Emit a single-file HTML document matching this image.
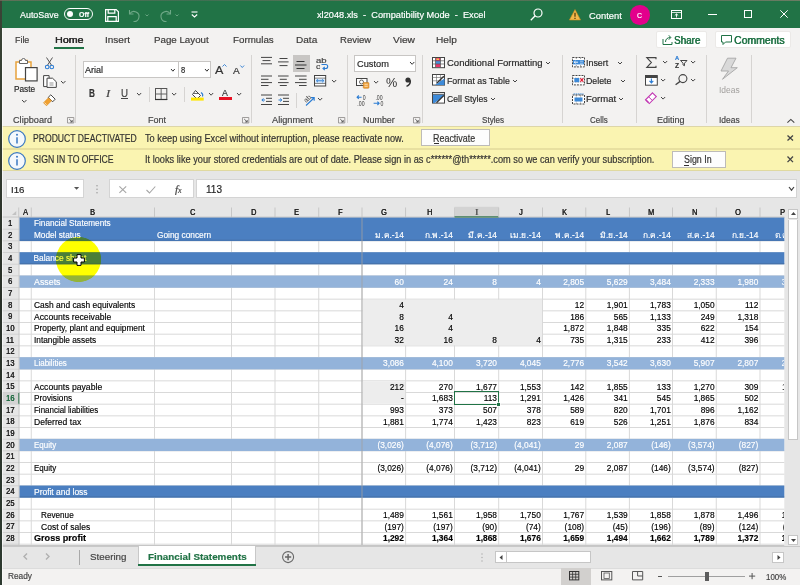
<!DOCTYPE html><html><head><meta charset="utf-8"><style>html,body{margin:0;padding:0;}body{width:800px;height:585px;overflow:hidden;position:relative;font-family:"Liberation Sans", sans-serif;background:#f3f2f1;}div{box-sizing:border-box;}</style></head><body>
<div style="position:absolute;left:0px;top:0px;width:800px;height:27.5px;background:#217346;"></div>
<div style="position:absolute;left:19.50px;top:10.00px;font-family:'Liberation Sans',sans-serif;font-size:9.4px;line-height:9.4px;color:#ffffff;font-weight:normal;white-space:nowrap;-webkit-text-stroke:0.18px #ffffff;transform:scaleX(0.9497);transform-origin:0 0;">AutoSave</div>
<div style="position:absolute;left:63.7px;top:8px;width:29.5px;height:12.2px;border:1.3px solid #fff;border-radius:6.5px;"></div>
<div style="position:absolute;left:67px;top:11px;width:6px;height:6px;background:#fff;border-radius:50%;"></div>
<div style="position:absolute;left:78.50px;top:11.00px;font-family:'Liberation Sans',sans-serif;font-size:7.8px;line-height:7.8px;color:#ffffff;font-weight:bold;white-space:nowrap;-webkit-text-stroke:0.18px #ffffff;transform:scaleX(0.8872);transform-origin:0 0;">Off</div>
<svg style="position:absolute;left:104.5px;top:8.5px;overflow:visible;" width="14" height="13" viewBox="0 0 14 13"><path d="M0.6 0.6h10.6l2.2 2.2v9.6H0.6z" fill="none" stroke="#fff" stroke-width="1.2"/><path d="M3.2 0.6v3.6h6.6V0.6M2.8 12.4V7.6h8.4v4.8" fill="none" stroke="#fff" stroke-width="1.2"/></svg>
<svg style="position:absolute;left:128px;top:8.5px;overflow:visible;" width="22" height="13" viewBox="0 0 22 13"><path d="M1.5 1v4h4" fill="none" stroke="#6fa887" stroke-width="1.1"/><path d="M1.8 4.8A5 5 0 1 1 5.5 12.5" fill="none" stroke="#6fa887" stroke-width="1.1"/><path d="M17.5 5.5l1.5 1.5 1.5-1.5" fill="none" stroke="#6fa887" stroke-width="0.9"/></svg>
<svg style="position:absolute;left:159px;top:8.5px;overflow:visible;" width="22" height="13" viewBox="0 0 22 13"><path d="M11.5 1v4h-4" fill="none" stroke="#6fa887" stroke-width="1.1"/><path d="M11.2 4.8A5 5 0 1 0 7.5 12.5" fill="none" stroke="#6fa887" stroke-width="1.1"/><path d="M16.5 5.5l1.5 1.5 1.5-1.5" fill="none" stroke="#6fa887" stroke-width="0.9"/></svg>
<svg style="position:absolute;left:191px;top:10.5px;overflow:visible;" width="7" height="8" viewBox="0 0 7 8"><path d="M0.5 1h6" stroke="#fff" stroke-width="1.1"/><path d="M0.8 3.5l2.7 2.4 2.7-2.4" fill="none" stroke="#fff" stroke-width="1.1"/></svg>
<div style="position:absolute;left:316.50px;top:11.00px;font-family:'Liberation Sans',sans-serif;font-size:9.0px;line-height:9.0px;color:#ffffff;font-weight:normal;white-space:nowrap;-webkit-text-stroke:0.18px #ffffff;transform:scaleX(1.0239);transform-origin:0 0;">xl2048.xls&nbsp; - &nbsp;Compatibility Mode&nbsp; - &nbsp;Excel</div>
<svg style="position:absolute;left:530px;top:7.5px;overflow:visible;" width="13" height="13" viewBox="0 0 13 13"><circle cx="8" cy="5" r="4" fill="none" stroke="#fff" stroke-width="1.2"/><path d="M5.2 7.8L0.8 12.2" stroke="#fff" stroke-width="1.3"/></svg>
<svg style="position:absolute;left:569px;top:9px;overflow:visible;" width="12" height="11.5" viewBox="0 0 12 11.5"><path d="M6 0.5L11.6 11H0.4z" fill="#f2b84b" stroke="#c98a1c" stroke-width="0.6"/><path d="M6 3.8v4M6 8.8v1.2" stroke="#3a2a00" stroke-width="1.1"/></svg>
<div style="position:absolute;left:588.75px;top:11.00px;font-family:'Liberation Sans',sans-serif;font-size:9.4px;line-height:9.4px;color:#ffffff;font-weight:normal;white-space:nowrap;-webkit-text-stroke:0.18px #ffffff;transform:scaleX(0.9971);transform-origin:0 0;">Content</div>
<div style="position:absolute;left:630px;top:5px;width:19.5px;height:19.5px;background:#e3008c;border-radius:50%;"></div>
<div style="position:absolute;left:636.90px;top:12.00px;font-family:'Liberation Sans',sans-serif;font-size:7.8px;line-height:7.8px;color:#ffffff;font-weight:normal;white-space:nowrap;-webkit-text-stroke:0.18px #ffffff;transform:scaleX(0.8903);transform-origin:0 0;">C</div>
<svg style="position:absolute;left:670.5px;top:9.5px;overflow:visible;" width="11" height="9" viewBox="0 0 11 9"><rect x="0.5" y="0.5" width="10" height="8" fill="none" stroke="#fff" stroke-width="1"/><path d="M0.5 2.5h10" stroke="#fff" stroke-width="0.8"/><path d="M5.5 4v3.5M3.8 5.5l1.7-1.6 1.7 1.6" fill="none" stroke="#fff" stroke-width="0.9"/></svg>
<div style="position:absolute;left:707.5px;top:13.5px;width:9.5px;height:1px;background:#fff;"></div>
<svg style="position:absolute;left:744px;top:10px;overflow:visible;" width="8" height="8" viewBox="0 0 8 8"><rect x="0.5" y="0.5" width="7" height="7" fill="none" stroke="#fff" stroke-width="1"/></svg>
<svg style="position:absolute;left:780px;top:10px;overflow:visible;" width="8" height="8" viewBox="0 0 8 8"><path d="M0.3 0.3l7.4 7.4M7.7 0.3L0.3 7.7" stroke="#fff" stroke-width="1"/></svg>
<div style="position:absolute;left:14.90px;top:35.00px;font-family:'Liberation Sans',sans-serif;font-size:9.5px;line-height:9.5px;color:#3b3a39;font-weight:normal;white-space:nowrap;-webkit-text-stroke:0.18px #3b3a39;transform:scaleX(0.9349);transform-origin:0 0;">File</div>
<div style="position:absolute;left:54.70px;top:35.00px;font-family:'Liberation Sans',sans-serif;font-size:9.5px;line-height:9.5px;color:#262626;font-weight:normal;white-space:nowrap;-webkit-text-stroke:0.18px #262626;transform:scaleX(1.1197);transform-origin:0 0;text-shadow:0.25px 0 0 #262626;">Home</div>
<div style="position:absolute;left:105.00px;top:35.00px;font-family:'Liberation Sans',sans-serif;font-size:9.5px;line-height:9.5px;color:#3b3a39;font-weight:normal;white-space:nowrap;-webkit-text-stroke:0.18px #3b3a39;transform:scaleX(1.0526);transform-origin:0 0;">Insert</div>
<div style="position:absolute;left:154.30px;top:35.00px;font-family:'Liberation Sans',sans-serif;font-size:9.5px;line-height:9.5px;color:#3b3a39;font-weight:normal;white-space:nowrap;-webkit-text-stroke:0.18px #3b3a39;transform:scaleX(1.0254);transform-origin:0 0;">Page Layout</div>
<div style="position:absolute;left:233.00px;top:35.00px;font-family:'Liberation Sans',sans-serif;font-size:9.5px;line-height:9.5px;color:#3b3a39;font-weight:normal;white-space:nowrap;-webkit-text-stroke:0.18px #3b3a39;transform:scaleX(1.0287);transform-origin:0 0;">Formulas</div>
<div style="position:absolute;left:296.25px;top:35.00px;font-family:'Liberation Sans',sans-serif;font-size:9.5px;line-height:9.5px;color:#3b3a39;font-weight:normal;white-space:nowrap;-webkit-text-stroke:0.18px #3b3a39;transform:scaleX(1.0576);transform-origin:0 0;">Data</div>
<div style="position:absolute;left:340.00px;top:35.00px;font-family:'Liberation Sans',sans-serif;font-size:9.5px;line-height:9.5px;color:#3b3a39;font-weight:normal;white-space:nowrap;-webkit-text-stroke:0.18px #3b3a39;transform:scaleX(1.0029);transform-origin:0 0;">Review</div>
<div style="position:absolute;left:392.50px;top:35.00px;font-family:'Liberation Sans',sans-serif;font-size:9.5px;line-height:9.5px;color:#3b3a39;font-weight:normal;white-space:nowrap;-webkit-text-stroke:0.18px #3b3a39;transform:scaleX(1.0771);transform-origin:0 0;">View</div>
<div style="position:absolute;left:435.50px;top:35.00px;font-family:'Liberation Sans',sans-serif;font-size:9.5px;line-height:9.5px;color:#3b3a39;font-weight:normal;white-space:nowrap;-webkit-text-stroke:0.18px #3b3a39;transform:scaleX(1.0629);transform-origin:0 0;">Help</div>
<div style="position:absolute;left:54px;top:47.3px;width:30px;height:2.2px;background:#217346;"></div>
<div style="position:absolute;left:655.6px;top:31px;width:51.4px;height:17.4px;background:#fff;border:1px solid #ebe9e7;border-radius:2px;"></div>
<svg style="position:absolute;left:661.5px;top:34px;overflow:visible;" width="12" height="11" viewBox="0 0 12 11"><path d="M1 5v5.5h9V8" fill="none" stroke="#217346" stroke-width="1"/><path d="M3.5 8c0-3 2-4.5 5-4.5M6.8 1.3l2 2.2-2 2.2" fill="none" stroke="#217346" stroke-width="1"/></svg>
<div style="position:absolute;left:674.00px;top:36.00px;font-family:'Liberation Sans',sans-serif;font-size:10px;line-height:10px;color:#217346;font-weight:normal;white-space:nowrap;-webkit-text-stroke:0.18px #217346;transform:scaleX(0.9850);transform-origin:0 0;text-shadow:0.35px 0 0 #217346;">Share</div>
<div style="position:absolute;left:714.8px;top:31px;width:76.4px;height:17.4px;background:#fff;border:1px solid #ebe9e7;border-radius:2px;"></div>
<svg style="position:absolute;left:721px;top:34.5px;overflow:visible;" width="11" height="10" viewBox="0 0 11 10"><path d="M0.5 0.5h10v6.5H4.5l-2.5 2.5V7H0.5z" fill="none" stroke="#217346" stroke-width="1"/></svg>
<div style="position:absolute;left:733.50px;top:36.00px;font-family:'Liberation Sans',sans-serif;font-size:10px;line-height:10px;color:#217346;font-weight:normal;white-space:nowrap;-webkit-text-stroke:0.18px #217346;transform:scaleX(1.0445);transform-origin:0 0;text-shadow:0.35px 0 0 #217346;">Comments</div>
<div style="position:absolute;left:75.2px;top:55px;width:1px;height:68px;background:#d6d4d2;"></div>
<div style="position:absolute;left:251.1px;top:55px;width:1px;height:68px;background:#d6d4d2;"></div>
<div style="position:absolute;left:346.9px;top:54.5px;width:1px;height:68.5px;background:#d6d4d2;"></div>
<div style="position:absolute;left:422.3px;top:55px;width:1px;height:68px;background:#d6d4d2;"></div>
<div style="position:absolute;left:562.3px;top:55px;width:1px;height:68px;background:#d6d4d2;"></div>
<div style="position:absolute;left:636.2px;top:54.5px;width:1px;height:68.0px;background:#d6d4d2;"></div>
<div style="position:absolute;left:706.3px;top:54.5px;width:1px;height:68.0px;background:#d6d4d2;"></div>
<div style="position:absolute;left:751.0px;top:54.5px;width:1px;height:68.0px;background:#d6d4d2;"></div>
<div style="position:absolute;left:12.90px;top:115.00px;font-family:'Liberation Sans',sans-serif;font-size:9.4px;line-height:9.4px;color:#444444;font-weight:normal;white-space:nowrap;-webkit-text-stroke:0.18px #444444;transform:scaleX(0.9768);transform-origin:0 0;">Clipboard</div>
<div style="position:absolute;left:148.00px;top:115.00px;font-family:'Liberation Sans',sans-serif;font-size:9.4px;line-height:9.4px;color:#444444;font-weight:normal;white-space:nowrap;-webkit-text-stroke:0.18px #444444;transform:scaleX(0.9628);transform-origin:0 0;">Font</div>
<div style="position:absolute;left:272.30px;top:115.00px;font-family:'Liberation Sans',sans-serif;font-size:9.4px;line-height:9.4px;color:#444444;font-weight:normal;white-space:nowrap;-webkit-text-stroke:0.18px #444444;transform:scaleX(0.9813);transform-origin:0 0;">Alignment</div>
<div style="position:absolute;left:362.90px;top:115.00px;font-family:'Liberation Sans',sans-serif;font-size:9.4px;line-height:9.4px;color:#444444;font-weight:normal;white-space:nowrap;-webkit-text-stroke:0.18px #444444;transform:scaleX(0.9546);transform-origin:0 0;">Number</div>
<div style="position:absolute;left:481.70px;top:115.00px;font-family:'Liberation Sans',sans-serif;font-size:9.4px;line-height:9.4px;color:#444444;font-weight:normal;white-space:nowrap;-webkit-text-stroke:0.18px #444444;transform:scaleX(0.8628);transform-origin:0 0;">Styles</div>
<div style="position:absolute;left:590.00px;top:115.00px;font-family:'Liberation Sans',sans-serif;font-size:9.4px;line-height:9.4px;color:#444444;font-weight:normal;white-space:nowrap;-webkit-text-stroke:0.18px #444444;transform:scaleX(0.8511);transform-origin:0 0;">Cells</div>
<div style="position:absolute;left:657.30px;top:115.00px;font-family:'Liberation Sans',sans-serif;font-size:9.4px;line-height:9.4px;color:#444444;font-weight:normal;white-space:nowrap;-webkit-text-stroke:0.18px #444444;transform:scaleX(0.9595);transform-origin:0 0;">Editing</div>
<div style="position:absolute;left:718.50px;top:115.00px;font-family:'Liberation Sans',sans-serif;font-size:9.4px;line-height:9.4px;color:#444444;font-weight:normal;white-space:nowrap;-webkit-text-stroke:0.18px #444444;transform:scaleX(0.9007);transform-origin:0 0;">Ideas</div>
<svg style="position:absolute;left:67.2px;top:116.8px;overflow:visible;" width="7.3" height="6.5" viewBox="0 0 7.3 6.5"><path d="M0.5 0.5h6.3v5.5H0.5z" fill="none" stroke="#8a8886" stroke-width="0.8"/><path d="M2.2 2l3 3M5.2 3v2H3.2" fill="none" stroke="#444" stroke-width="0.8"/></svg>
<svg style="position:absolute;left:242.2px;top:116.8px;overflow:visible;" width="7.3" height="6.5" viewBox="0 0 7.3 6.5"><path d="M0.5 0.5h6.3v5.5H0.5z" fill="none" stroke="#8a8886" stroke-width="0.8"/><path d="M2.2 2l3 3M5.2 3v2H3.2" fill="none" stroke="#444" stroke-width="0.8"/></svg>
<svg style="position:absolute;left:337.5px;top:116.8px;overflow:visible;" width="7.3" height="6.5" viewBox="0 0 7.3 6.5"><path d="M0.5 0.5h6.3v5.5H0.5z" fill="none" stroke="#8a8886" stroke-width="0.8"/><path d="M2.2 2l3 3M5.2 3v2H3.2" fill="none" stroke="#444" stroke-width="0.8"/></svg>
<svg style="position:absolute;left:412.6px;top:116.8px;overflow:visible;" width="7.3" height="6.5" viewBox="0 0 7.3 6.5"><path d="M0.5 0.5h6.3v5.5H0.5z" fill="none" stroke="#8a8886" stroke-width="0.8"/><path d="M2.2 2l3 3M5.2 3v2H3.2" fill="none" stroke="#444" stroke-width="0.8"/></svg>
<svg style="position:absolute;left:787.2px;top:119px;overflow:visible;" width="7.7" height="4" viewBox="0 0 7.7 4"><path d="M0.4 3.6L3.85 0.4 7.3 3.6" fill="none" stroke="#444" stroke-width="1.1"/></svg>
<svg style="position:absolute;left:14px;top:56.5px;overflow:visible;" width="24" height="25" viewBox="0 0 24 25"><path d="M2 5h4v-1.5h7V5h4v17H2z" fill="#fff" stroke="#e8a33d" stroke-width="1.5"/><path d="M5.5 6.5v-3h2a2 2 0 0 1 4 0h2v3z" fill="#fff" stroke="#666" stroke-width="1"/><rect x="11.5" y="10.6" width="11.6" height="13.3" fill="#fff" stroke="#444" stroke-width="1.2"/></svg>
<div style="position:absolute;left:13.90px;top:84.00px;font-family:'Liberation Sans',sans-serif;font-size:9.4px;line-height:9.4px;color:#262626;font-weight:normal;white-space:nowrap;-webkit-text-stroke:0.18px #262626;transform:scaleX(0.8827);transform-origin:0 0;">Paste</div>
<svg style="position:absolute;left:20.55px;top:99.35px;overflow:visible;" width="6.5" height="4.3" viewBox="0 0 6.5 4.3"><path d="M1 1L3.25 3.3L5.5 1" fill="none" stroke="#444" stroke-width="1"/></svg>
<svg style="position:absolute;left:44.5px;top:57px;overflow:visible;" width="9" height="12.5" viewBox="0 0 9 12.5"><path d="M1.5 0.5l5.2 8M7.5 0.5l-5.2 8" stroke="#555" stroke-width="1"/><circle cx="2.2" cy="10" r="1.8" fill="none" stroke="#2b7cd3" stroke-width="1.1"/><circle cx="6.8" cy="10" r="1.8" fill="none" stroke="#2b7cd3" stroke-width="1.1"/></svg>
<svg style="position:absolute;left:42.5px;top:75px;overflow:visible;" width="14" height="13" viewBox="0 0 14 13"><path d="M0.6 0.6h5.5v11h-5.5z" fill="#fff" stroke="#444" stroke-width="1"/><path d="M4 3.2h5.5l3.8 3.6v5.6H4z" fill="#fff" stroke="#444" stroke-width="1"/><path d="M6.5 8h4M6.5 10h4" stroke="#666" stroke-width="0.7"/></svg>
<svg style="position:absolute;left:59.55px;top:80.14999999999999px;overflow:visible;" width="6.5" height="4.3" viewBox="0 0 6.5 4.3"><path d="M1 1L3.25 3.3L5.5 1" fill="none" stroke="#444" stroke-width="1"/></svg>
<svg style="position:absolute;left:43px;top:93.8px;overflow:visible;" width="13" height="12.5" viewBox="0 0 13 12.5"><path d="M7.8 0.8l4.4 4.4-2.6 2.6-4.4-4.4z" fill="#fff" stroke="#444" stroke-width="1"/><path d="M5.5 3.8L0.5 8.8l3 3 5-5z" fill="#f0a030" stroke="#d98a1a" stroke-width="0.6"/><path d="M1.5 8.5l2.2 2.2" stroke="#fff" stroke-width="0.6"/></svg>
<div style="position:absolute;left:82.5px;top:61px;width:96px;height:17px;background:#fff;border:1px solid #c8c6c4;"></div>
<div style="position:absolute;left:85.30px;top:66.00px;font-family:'Liberation Sans',sans-serif;font-size:9.2px;line-height:9.2px;color:#262626;font-weight:normal;white-space:nowrap;-webkit-text-stroke:0.18px #262626;transform:scaleX(0.9837);transform-origin:0 0;">Arial</div>
<svg style="position:absolute;left:170.4px;top:68.10000000000001px;overflow:visible;" width="5.8" height="4.2" viewBox="0 0 5.8 4.2"><path d="M1 1L2.9 3.2L4.8 1" fill="none" stroke="#333" stroke-width="1"/></svg>
<div style="position:absolute;left:177.7px;top:61px;width:33.6px;height:17px;background:#fff;border:1px solid #c8c6c4;"></div>
<div style="position:absolute;left:181.00px;top:66.00px;font-family:'Liberation Sans',sans-serif;font-size:9.2px;line-height:9.2px;color:#262626;font-weight:normal;white-space:nowrap;-webkit-text-stroke:0.18px #262626;transform:scaleX(0.8226);transform-origin:0 0;">8</div>
<svg style="position:absolute;left:204.1px;top:68.10000000000001px;overflow:visible;" width="5.8" height="4.2" viewBox="0 0 5.8 4.2"><path d="M1 1L2.9 3.2L4.8 1" fill="none" stroke="#333" stroke-width="1"/></svg>
<div style="position:absolute;left:215.00px;top:65.00px;font-family:'Liberation Sans',sans-serif;font-size:11.5px;line-height:11.5px;color:#333;font-weight:normal;white-space:nowrap;-webkit-text-stroke:0.18px #333;transform:scaleX(1.0902);transform-origin:0 0;">A</div>
<svg style="position:absolute;left:222px;top:63.5px;overflow:visible;" width="5" height="3" viewBox="0 0 5 3"><path d="M0.5 2.5l2-2 2 2" fill="none" stroke="#2b7cd3" stroke-width="0.9"/></svg>
<div style="position:absolute;left:233.00px;top:66.00px;font-family:'Liberation Sans',sans-serif;font-size:9.8px;line-height:9.8px;color:#333;font-weight:normal;white-space:nowrap;-webkit-text-stroke:0.18px #333;transform:scaleX(1.0356);transform-origin:0 0;">A</div>
<svg style="position:absolute;left:239.8px;top:64.5px;overflow:visible;" width="4.5" height="3" viewBox="0 0 4.5 3"><path d="M0.4 0.5l1.85 2 1.85-2" fill="none" stroke="#2b7cd3" stroke-width="0.9"/></svg>
<div style="position:absolute;left:88.50px;top:88.00px;font-family:'Liberation Sans',sans-serif;font-size:10.5px;line-height:10.5px;color:#333;font-weight:bold;white-space:nowrap;-webkit-text-stroke:0.18px #333;transform:scaleX(0.7804);transform-origin:0 0;">B</div>
<div style="position:absolute;left:105.50px;top:89.00px;font-family:'Liberation Serif',serif;font-size:10.5px;line-height:10.5px;color:#444;font-weight:normal;white-space:nowrap;-webkit-text-stroke:0.18px #444;transform:scaleX(1.1940);transform-origin:0 0;font-style:italic;">I</div>
<div style="position:absolute;left:121.40px;top:89.00px;font-family:'Liberation Sans',sans-serif;font-size:10px;line-height:10px;color:#444;font-weight:normal;white-space:nowrap;-webkit-text-stroke:0.18px #444;transform:scaleX(0.9722);transform-origin:0 0;">U</div>
<div style="position:absolute;left:121.2px;top:98.3px;width:7.3px;height:0.9px;background:#444;"></div>
<svg style="position:absolute;left:136.20000000000002px;top:92.2px;overflow:visible;" width="6.2" height="4.2" viewBox="0 0 6.2 4.2"><path d="M1 1L3.1 3.2L5.2 1" fill="none" stroke="#444" stroke-width="1"/></svg>
<svg style="position:absolute;left:171.4px;top:92.2px;overflow:visible;" width="6.2" height="4.2" viewBox="0 0 6.2 4.2"><path d="M1 1L3.1 3.2L5.2 1" fill="none" stroke="#444" stroke-width="1"/></svg>
<svg style="position:absolute;left:207.6px;top:92.2px;overflow:visible;" width="6.2" height="4.2" viewBox="0 0 6.2 4.2"><path d="M1 1L3.1 3.2L5.2 1" fill="none" stroke="#444" stroke-width="1"/></svg>
<svg style="position:absolute;left:236.20000000000002px;top:92.2px;overflow:visible;" width="6.2" height="4.2" viewBox="0 0 6.2 4.2"><path d="M1 1L3.1 3.2L5.2 1" fill="none" stroke="#444" stroke-width="1"/></svg>
<div style="position:absolute;left:148.5px;top:87px;width:1px;height:14.7px;background:#d6d4d2;"></div>
<div style="position:absolute;left:184px;top:87px;width:1px;height:14.7px;background:#d6d4d2;"></div>
<svg style="position:absolute;left:154.8px;top:88px;overflow:visible;" width="12.3" height="12" viewBox="0 0 12.3 12"><rect x="0.5" y="0.5" width="11.3" height="11" fill="none" stroke="#555" stroke-width="1"/><path d="M6.15 0.5v11M0.5 6h11.3" stroke="#555" stroke-width="0.9"/><path d="M0 11.5h12.3" stroke="#333" stroke-width="1.2"/></svg>
<svg style="position:absolute;left:190.5px;top:88.5px;overflow:visible;" width="13" height="12" viewBox="0 0 13 12"><path d="M4.5 1.5l5 5-3.5 3.5-4.5-4.5z" fill="#fff" stroke="#444" stroke-width="1"/><path d="M2.5 4.5h5" stroke="#444" stroke-width="0.8"/><path d="M10 3.5c1.5 1 2 2.8 1.5 4" fill="none" stroke="#2b7cd3" stroke-width="1.1"/><rect x="0" y="8.6" width="12.7" height="3" fill="#ffe600"/></svg>
<div style="position:absolute;left:222.40px;top:88.00px;font-family:'Liberation Sans',sans-serif;font-size:9.6px;line-height:9.6px;color:#333;font-weight:normal;white-space:nowrap;-webkit-text-stroke:0.18px #333;transform:scaleX(0.9173);transform-origin:0 0;">A</div>
<div style="position:absolute;left:219.2px;top:97px;width:12.8px;height:3px;background:#e81123;"></div>
<div style="position:absolute;left:292.8px;top:54.7px;width:17px;height:17.2px;background:#c8c6c4;"></div>
<svg style="position:absolute;left:261.4px;top:56px;overflow:visible;" width="14" height="12" viewBox="0 0 14 12"><path d="M0 1.4H11" stroke="#444" stroke-width="1.0"/><path d="M1.5 4.6H9.5" stroke="#444" stroke-width="1.0"/><path d="M0 7.8H11" stroke="#444" stroke-width="1.0"/></svg>
<svg style="position:absolute;left:278.4px;top:57.4px;overflow:visible;" width="14" height="12" viewBox="0 0 14 12"><path d="M1.5 1.5H9.5" stroke="#444" stroke-width="1.0"/><path d="M0 4.9H10.6" stroke="#444" stroke-width="1.0"/><path d="M1.5 8.6H9.5" stroke="#444" stroke-width="1.0"/></svg>
<svg style="position:absolute;left:295.4px;top:60.2px;overflow:visible;" width="14" height="12" viewBox="0 0 14 12"><path d="M1.5 1.5H9.5" stroke="#333" stroke-width="1.0"/><path d="M0 5H11.5" stroke="#333" stroke-width="1.0"/><path d="M1.5 8.5H9.5" stroke="#333" stroke-width="1.0"/></svg>
<div style="position:absolute;left:316.20px;top:57.00px;font-family:'Liberation Sans',sans-serif;font-size:7.2px;line-height:7.2px;color:#444;font-weight:normal;white-space:nowrap;-webkit-text-stroke:0.18px #444;transform:scaleX(1.3263);transform-origin:0 0;">ab</div>
<div style="position:absolute;left:316.20px;top:63.00px;font-family:'Liberation Sans',sans-serif;font-size:7.2px;line-height:7.2px;color:#444;font-weight:normal;white-space:nowrap;-webkit-text-stroke:0.18px #444;transform:scaleX(1.1944);transform-origin:0 0;">c</div>
<svg style="position:absolute;left:320.5px;top:62.5px;overflow:visible;" width="7.5" height="7" viewBox="0 0 7.5 7"><path d="M0.5 1.5h4.2a2 2 0 0 1 0 4H2.5" fill="none" stroke="#2b7cd3" stroke-width="1.1"/><path d="M3.8 3.8L2 5.5l1.8 1.6" fill="none" stroke="#2b7cd3" stroke-width="1.1"/></svg>
<svg style="position:absolute;left:261.4px;top:75.4px;overflow:visible;" width="14" height="12" viewBox="0 0 14 12"><path d="M0 1H11" stroke="#444" stroke-width="1.0"/><path d="M0 4.3H7.5" stroke="#444" stroke-width="1.0"/><path d="M0 7.6H11" stroke="#444" stroke-width="1.0"/><path d="M0 10.5H7.5" stroke="#444" stroke-width="1.0"/></svg>
<svg style="position:absolute;left:278.4px;top:75.4px;overflow:visible;" width="14" height="12" viewBox="0 0 14 12"><path d="M0 1H10.6" stroke="#444" stroke-width="1.0"/><path d="M1.8 4.3H8.8" stroke="#444" stroke-width="1.0"/><path d="M0 7.6H10.6" stroke="#444" stroke-width="1.0"/><path d="M1.8 10.5H8.8" stroke="#444" stroke-width="1.0"/></svg>
<svg style="position:absolute;left:295.4px;top:75.4px;overflow:visible;" width="14" height="12" viewBox="0 0 14 12"><path d="M0 1H11.6" stroke="#444" stroke-width="1.0"/><path d="M4 4.3H11.6" stroke="#444" stroke-width="1.0"/><path d="M0 7.6H11.6" stroke="#444" stroke-width="1.0"/><path d="M4 10.5H11.6" stroke="#444" stroke-width="1.0"/></svg>
<svg style="position:absolute;left:314px;top:75px;overflow:visible;" width="12.2" height="11.5" viewBox="0 0 12.2 11.5"><rect x="0.5" y="0.5" width="11.2" height="10.5" fill="#fff" stroke="#444" stroke-width="1"/><path d="M0.5 3.2h11.2M0.5 8.3h11.2" stroke="#444" stroke-width="0.8"/><rect x="1.5" y="3.7" width="9.2" height="4.1" fill="#cfe3f7"/><path d="M2.5 5.75h7.2M4 4.3L2.5 5.75 4 7.2M8.2 4.3l1.5 1.45-1.5 1.45" fill="none" stroke="#2b7cd3" stroke-width="0.9"/></svg>
<svg style="position:absolute;left:331.0px;top:79.10000000000001px;overflow:visible;" width="6.2" height="4.2" viewBox="0 0 6.2 4.2"><path d="M1 1L3.1 3.2L5.2 1" fill="none" stroke="#444" stroke-width="1"/></svg>
<svg style="position:absolute;left:261.4px;top:94.2px;overflow:visible;" width="14" height="12" viewBox="0 0 14 12"><path d="M0 1H11" stroke="#444" stroke-width="1.0"/><path d="M5 4.3H11" stroke="#444" stroke-width="1.0"/><path d="M5 7.4H11" stroke="#444" stroke-width="1.0"/><path d="M0 10.5H11" stroke="#444" stroke-width="1.0"/></svg>
<svg style="position:absolute;left:261.4px;top:96.5px;overflow:visible;transform:translateY(2px);" width="5" height="5" viewBox="0 0 5 5"><path d="M4 1H1.2M2.5 -0.5L0.8 1 2.5 2.5" fill="none" stroke="#2b7cd3" stroke-width="1"/></svg>
<svg style="position:absolute;left:278.4px;top:94.2px;overflow:visible;" width="14" height="12" viewBox="0 0 14 12"><path d="M0 1H11" stroke="#444" stroke-width="1.0"/><path d="M5 4.3H11" stroke="#444" stroke-width="1.0"/><path d="M5 7.4H11" stroke="#444" stroke-width="1.0"/><path d="M0 10.5H11" stroke="#444" stroke-width="1.0"/></svg>
<svg style="position:absolute;left:278.4px;top:96.5px;overflow:visible;transform:translateY(2px);" width="5" height="5" viewBox="0 0 5 5"><path d="M0.5 1H3.5M2.2 -0.5L3.9 1 2.2 2.5" fill="none" stroke="#2b7cd3" stroke-width="1"/></svg>
<div style="position:absolute;left:295.5px;top:92.5px;width:1px;height:15.3px;background:#d6d4d2;"></div>
<svg style="position:absolute;left:301.7px;top:93.6px;overflow:visible;" width="13.3" height="12.1" viewBox="0 0 13.3 12.1"><text x="1.5" y="8" font-size="6.8" fill="#444" font-family="Liberation Sans" transform="rotate(-45 4 5)">ab</text><path d="M4 11.5l8-7.5M9 3.6h3.2v3.2" fill="none" stroke="#2b7cd3" stroke-width="1.1"/></svg>
<svg style="position:absolute;left:317.29999999999995px;top:97.4px;overflow:visible;" width="6.2" height="4.2" viewBox="0 0 6.2 4.2"><path d="M1 1L3.1 3.2L5.2 1" fill="none" stroke="#444" stroke-width="1"/></svg>
<div style="position:absolute;left:353.8px;top:54.7px;width:62.7px;height:17.6px;background:#fff;border:1px solid #c8c6c4;"></div>
<div style="position:absolute;left:357.00px;top:59.00px;font-family:'Liberation Sans',sans-serif;font-size:9.4px;line-height:9.4px;color:#262626;font-weight:normal;white-space:nowrap;-webkit-text-stroke:0.18px #262626;transform:scaleX(0.9851);transform-origin:0 0;">Custom</div>
<svg style="position:absolute;left:408.65000000000003px;top:61.35px;overflow:visible;" width="6.3" height="4.3" viewBox="0 0 6.3 4.3"><path d="M1 1L3.15 3.3L5.3 1" fill="none" stroke="#333" stroke-width="1"/></svg>
<svg style="position:absolute;left:356px;top:77.6px;overflow:visible;" width="13.3" height="10.5" viewBox="0 0 13.3 10.5"><rect x="0.5" y="0.5" width="10.5" height="7" fill="#fff" stroke="#444" stroke-width="1"/><circle cx="5.5" cy="4" r="2" fill="none" stroke="#444" stroke-width="0.8"/><rect x="7.3" y="4.6" width="5.6" height="5.6" rx="0.6" fill="#f2a33a" stroke="#c9781a" stroke-width="0.6"/><path d="M8.5 6.3h3.2M8.5 8.3h3.2" stroke="#fff" stroke-width="0.6"/></svg>
<svg style="position:absolute;left:373.0px;top:80.4px;overflow:visible;" width="6.2" height="4.2" viewBox="0 0 6.2 4.2"><path d="M1 1L3.1 3.2L5.2 1" fill="none" stroke="#444" stroke-width="1"/></svg>
<div style="position:absolute;left:385.70px;top:76.00px;font-family:'Liberation Sans',sans-serif;font-size:13px;line-height:13px;color:#333;font-weight:normal;white-space:nowrap;-webkit-text-stroke:0.18px #333;transform:scaleX(0.9767);transform-origin:0 0;-webkit-text-stroke:0;">%</div>
<svg style="position:absolute;left:405.4px;top:77.2px;overflow:visible;" width="6.5" height="9.8" viewBox="0 0 6.5 9.8"><circle cx="3" cy="3" r="2.6" fill="#333"/><path d="M5.3 3.2c0.2 3-1.2 5.2-3.8 6.2" fill="none" stroke="#333" stroke-width="1.5"/></svg>
<svg style="position:absolute;left:356px;top:93.6px;overflow:visible;" width="13" height="12.2" viewBox="0 0 13 12.2"><path d="M5.6 3.2H1.2M2.8 1.5L1.1 3.2l1.7 1.7" fill="none" stroke="#2b7cd3" stroke-width="1.1"/><g transform="scale(0.68 1)"><text x="10" y="6" font-size="7.6" fill="#333" font-family="Liberation Sans">0</text><text x="2" y="12.4" font-size="7.6" fill="#333" font-family="Liberation Sans">.00</text></g></svg>
<svg style="position:absolute;left:373px;top:93.6px;overflow:visible;" width="13" height="12.2" viewBox="0 0 13 12.2"><g transform="scale(0.68 1)"><text x="3.5" y="6" font-size="7.6" fill="#333" font-family="Liberation Sans">.00</text><text x="11.2" y="12.4" font-size="7.6" fill="#333" font-family="Liberation Sans">0</text></g><path d="M0.6 9.3h5.4M4.4 7.6l1.7 1.7-1.7 1.7" fill="none" stroke="#2b7cd3" stroke-width="1.1"/></svg>
<svg style="position:absolute;left:431.6px;top:56.7px;overflow:visible;" width="13" height="11.2" viewBox="0 0 13 11.2"><rect x="0.5" y="0.5" width="12" height="10.2" fill="#fff" stroke="#444" stroke-width="1"/><rect x="3.5" y="1" width="5" height="3" fill="#e8356b"/><rect x="3.5" y="4" width="5" height="3" fill="#4a90d9"/><rect x="3.5" y="7" width="5" height="3" fill="#e8356b"/><rect x="4.5" y="1.5" width="2.5" height="1.5" fill="#f2c14e"/><path d="M0.5 3.8h12M0.5 7h12M3.5 0.5v10.2M8.5 0.5v10.2" stroke="#555" stroke-width="0.7"/></svg>
<div style="position:absolute;left:447.30px;top:58.00px;font-family:'Liberation Sans',sans-serif;font-size:9.9px;line-height:9.9px;color:#262626;font-weight:normal;white-space:nowrap;-webkit-text-stroke:0.18px #262626;transform:scaleX(0.9619);transform-origin:0 0;">Conditional Formatting</div>
<svg style="position:absolute;left:545.1px;top:60.7px;overflow:visible;" width="6" height="4" viewBox="0 0 6 4"><path d="M1 1L3.0 3L5 1" fill="none" stroke="#444" stroke-width="1"/></svg>
<svg style="position:absolute;left:431.6px;top:74.4px;overflow:visible;" width="13" height="11.6" viewBox="0 0 13 11.6"><rect x="0.5" y="0.5" width="12" height="10.6" fill="#fff" stroke="#444" stroke-width="1"/><path d="M0.5 3.5h12M0.5 6.8h12M4.5 0.5v10.6M8.5 0.5v10.6" stroke="#666" stroke-width="0.6"/><path d="M12.5 4.5v6.6H3z" fill="#3d8ad8"/><path d="M11.8 2.2L5 9" stroke="#333" stroke-width="1.3"/></svg>
<div style="position:absolute;left:447.30px;top:76.00px;font-family:'Liberation Sans',sans-serif;font-size:9.9px;line-height:9.9px;color:#262626;font-weight:normal;white-space:nowrap;-webkit-text-stroke:0.18px #262626;transform:scaleX(0.8900);transform-origin:0 0;">Format as Table</div>
<svg style="position:absolute;left:512.2px;top:78.5px;overflow:visible;" width="6" height="4" viewBox="0 0 6 4"><path d="M1 1L3.0 3L5 1" fill="none" stroke="#444" stroke-width="1"/></svg>
<svg style="position:absolute;left:431.6px;top:92.2px;overflow:visible;" width="13" height="11.6" viewBox="0 0 13 11.6"><rect x="0.5" y="0.5" width="12" height="10.6" fill="#fff" stroke="#444" stroke-width="1"/><path d="M1 2.5h11v1.5L2.5 11H1z" fill="#3d8ad8"/><path d="M0.5 2.3h12" stroke="#444" stroke-width="0.8"/><path d="M11.8 3.5L4.5 10.8" stroke="#333" stroke-width="1.3"/></svg>
<div style="position:absolute;left:447.30px;top:94.00px;font-family:'Liberation Sans',sans-serif;font-size:9.9px;line-height:9.9px;color:#262626;font-weight:normal;white-space:nowrap;-webkit-text-stroke:0.18px #262626;transform:scaleX(0.8701);transform-origin:0 0;">Cell Styles</div>
<svg style="position:absolute;left:489.8px;top:96.5px;overflow:visible;" width="6" height="4" viewBox="0 0 6 4"><path d="M1 1L3.0 3L5 1" fill="none" stroke="#444" stroke-width="1"/></svg>
<svg style="position:absolute;left:572px;top:57.1px;overflow:visible;" width="13" height="10.4" viewBox="0 0 13 10.4"><rect x="0.5" y="0.5" width="12" height="9.4" fill="#fff" stroke="#444" stroke-width="1" stroke-dasharray="2 1"/><path d="M4.3 0.5v9.4M8.6 0.5v9.4" stroke="#777" stroke-width="0.7" stroke-dasharray="1.5 1"/><rect x="1" y="3" width="11" height="4.4" fill="#3d8ad8"/><path d="M6 5.2H2.2M3.5 4L2.2 5.2 3.5 6.4" fill="none" stroke="#fff" stroke-width="0.9"/><path d="M8 4.2h3M8 6.2h3" stroke="#cfe3f7" stroke-width="0.7"/></svg>
<div style="position:absolute;left:586.40px;top:58.00px;font-family:'Liberation Sans',sans-serif;font-size:9.9px;line-height:9.9px;color:#262626;font-weight:normal;white-space:nowrap;-webkit-text-stroke:0.18px #262626;transform:scaleX(0.9010);transform-origin:0 0;">Insert</div>
<svg style="position:absolute;left:617.0px;top:60.7px;overflow:visible;" width="6" height="4" viewBox="0 0 6 4"><path d="M1 1L3.0 3L5 1" fill="none" stroke="#444" stroke-width="1"/></svg>
<svg style="position:absolute;left:572px;top:75px;overflow:visible;" width="13" height="10.4" viewBox="0 0 13 10.4"><rect x="0.5" y="0.5" width="12" height="9.4" fill="#fff" stroke="#444" stroke-width="1" stroke-dasharray="2 1"/><path d="M0.5 3.2h12M0.5 7h12" stroke="#777" stroke-width="0.7" stroke-dasharray="1.5 1"/><rect x="2.3" y="3" width="5" height="4.2" fill="#3d8ad8"/><path d="M8.3 3.3l3 3.4M11.3 3.3l-3 3.4" stroke="#e8112d" stroke-width="1.1"/></svg>
<div style="position:absolute;left:586.40px;top:76.00px;font-family:'Liberation Sans',sans-serif;font-size:9.9px;line-height:9.9px;color:#262626;font-weight:normal;white-space:nowrap;-webkit-text-stroke:0.18px #262626;transform:scaleX(0.8913);transform-origin:0 0;">Delete</div>
<svg style="position:absolute;left:619.7px;top:78.5px;overflow:visible;" width="6" height="4" viewBox="0 0 6 4"><path d="M1 1L3.0 3L5 1" fill="none" stroke="#444" stroke-width="1"/></svg>
<svg style="position:absolute;left:572px;top:92.5px;overflow:visible;" width="13" height="11.5" viewBox="0 0 13 11.5"><path d="M1.5 1h10" stroke="#3d8ad8" stroke-width="1.2" stroke-dasharray="1.6 0.6"/><rect x="0.5" y="2" width="12" height="9" fill="#fff" stroke="#444" stroke-width="1" stroke-dasharray="2 1"/><path d="M4.3 2v9M8.6 2v9" stroke="#777" stroke-width="0.7" stroke-dasharray="1.5 1"/><rect x="2.5" y="4.5" width="8" height="4" fill="#3d8ad8"/></svg>
<div style="position:absolute;left:586.40px;top:94.00px;font-family:'Liberation Sans',sans-serif;font-size:9.9px;line-height:9.9px;color:#262626;font-weight:normal;white-space:nowrap;-webkit-text-stroke:0.18px #262626;transform:scaleX(0.9638);transform-origin:0 0;">Format</div>
<svg style="position:absolute;left:618.2px;top:96.5px;overflow:visible;" width="6" height="4" viewBox="0 0 6 4"><path d="M1 1L3.0 3L5 1" fill="none" stroke="#444" stroke-width="1"/></svg>
<svg style="position:absolute;left:646.3px;top:57.2px;overflow:visible;" width="10.4" height="11" viewBox="0 0 10.4 11"><path d="M10 2.2V0.6H0.8L5.4 5.5 0.8 10.4H10V8.8" fill="none" stroke="#444" stroke-width="1.1"/></svg>
<svg style="position:absolute;left:661.8px;top:60.35px;overflow:visible;" width="6.2" height="4.1" viewBox="0 0 6.2 4.1"><path d="M1 1L3.1 3.1L5.2 1" fill="none" stroke="#444" stroke-width="1"/></svg>
<div style="position:absolute;left:675.20px;top:56.00px;font-family:'Liberation Sans',sans-serif;font-size:5.6px;line-height:5.6px;color:#2b7cd3;font-weight:bold;white-space:nowrap;-webkit-text-stroke:0.18px #2b7cd3;transform:scaleX(1.0169);transform-origin:0 0;">A</div>
<div style="position:absolute;left:675.20px;top:62.00px;font-family:'Liberation Sans',sans-serif;font-size:7.4px;line-height:7.4px;color:#333;font-weight:bold;white-space:nowrap;-webkit-text-stroke:0.18px #333;transform:scaleX(0.9083);transform-origin:0 0;">Z</div>
<svg style="position:absolute;left:680.4px;top:60.3px;overflow:visible;" width="7.5" height="6" viewBox="0 0 7.5 6"><path d="M0.5 0.5h6.5L4.5 3.2v2.5l-1.5-0.8V3.2z" fill="none" stroke="#444" stroke-width="1"/></svg>
<svg style="position:absolute;left:690.1px;top:60.35px;overflow:visible;" width="6.2" height="4.1" viewBox="0 0 6.2 4.1"><path d="M1 1L3.1 3.1L5.2 1" fill="none" stroke="#444" stroke-width="1"/></svg>
<svg style="position:absolute;left:644.9px;top:74.8px;overflow:visible;" width="12.8" height="10.7" viewBox="0 0 12.8 10.7"><rect x="0.5" y="0.5" width="11.8" height="9.7" fill="#fff" stroke="#444" stroke-width="1"/><path d="M0.5 2h11.8" stroke="#444" stroke-width="2"/><path d="M6.4 3.5v4.5M4.5 6l1.9 2 1.9-2" fill="none" stroke="#2b7cd3" stroke-width="1.1"/></svg>
<svg style="position:absolute;left:660.4px;top:78.15px;overflow:visible;" width="6.2" height="4.1" viewBox="0 0 6.2 4.1"><path d="M1 1L3.1 3.1L5.2 1" fill="none" stroke="#444" stroke-width="1"/></svg>
<svg style="position:absolute;left:675.2px;top:74.3px;overflow:visible;" width="12.5" height="11.2" viewBox="0 0 12.5 11.2"><circle cx="7.9" cy="4.6" r="4" fill="none" stroke="#444" stroke-width="1.1"/><path d="M5.1 7.4L0.6 10.8" stroke="#444" stroke-width="1.3"/></svg>
<svg style="position:absolute;left:690.1px;top:78.15px;overflow:visible;" width="6.2" height="4.1" viewBox="0 0 6.2 4.1"><path d="M1 1L3.1 3.1L5.2 1" fill="none" stroke="#444" stroke-width="1"/></svg>
<svg style="position:absolute;left:645.3px;top:92.3px;overflow:visible;" width="12" height="11.7" viewBox="0 0 12 11.7"><path d="M7.5 0.8l3.8 3.8-7 7-3.8-3.8z" fill="#fff" stroke="#c239b3" stroke-width="1.1"/><path d="M3.6 4.8l3.8 3.8" stroke="#c239b3" stroke-width="1"/><path d="M1 8l2.5 2.5" stroke="#c239b3" stroke-width="1.5"/></svg>
<svg style="position:absolute;left:660.4px;top:96.45px;overflow:visible;" width="6.2" height="4.1" viewBox="0 0 6.2 4.1"><path d="M1 1L3.1 3.1L5.2 1" fill="none" stroke="#444" stroke-width="1"/></svg>
<svg style="position:absolute;left:720px;top:56.5px;overflow:visible;" width="18" height="23" viewBox="0 0 18 23"><path d="M7.5 1.2 L16.0 1.2 L11.0 10.7 L17.3 10.7 L2.5 22.3 L8.5 14.0 L1.0 14.0z" fill="#d9d9d9" stroke="#a6a6a6" stroke-width="0.9" stroke-linejoin="round"/></svg>
<div style="position:absolute;left:718.50px;top:85.00px;font-family:'Liberation Sans',sans-serif;font-size:9.6px;line-height:9.6px;color:#a19f9d;font-weight:normal;white-space:nowrap;-webkit-text-stroke:0.18px #a19f9d;transform:scaleX(0.8819);transform-origin:0 0;-webkit-text-stroke:0;">Ideas</div>
<div style="position:absolute;left:0px;top:125.8px;width:800px;height:45px;background:#faf4b1;"></div>
<div style="position:absolute;left:0px;top:125.8px;width:800px;height:1px;background:#ddd6a8;"></div>
<div style="position:absolute;left:0px;top:148.4px;width:800px;height:1.2px;background:#e8e0a0;"></div>
<div style="position:absolute;left:0px;top:170.2px;width:800px;height:0.8px;background:#e0d9a0;"></div>
<svg style="position:absolute;left:7.9px;top:130.1px;overflow:visible;" width="18" height="18" viewBox="0 0 18 18"><circle cx="9" cy="9" r="8.3" fill="#f4f8fc" stroke="#3a78c2" stroke-width="1.2"/><path d="M9 7.2v6.3" stroke="#3a78c2" stroke-width="1.5"/><circle cx="9" cy="4.8" r="1" fill="#3a78c2"/></svg>
<svg style="position:absolute;left:7.9px;top:151.9px;overflow:visible;" width="18" height="18" viewBox="0 0 18 18"><circle cx="9" cy="9" r="8.3" fill="#f4f8fc" stroke="#3a78c2" stroke-width="1.2"/><path d="M9 7.2v6.3" stroke="#3a78c2" stroke-width="1.5"/><circle cx="9" cy="4.8" r="1" fill="#3a78c2"/></svg>
<svg style="position:absolute;left:786.7px;top:134.9px;overflow:visible;" width="6.5" height="6.1" viewBox="0 0 6.5 6.1"><path d="M0.5 0.5l5.5 5.1M6 0.5L0.5 5.6" stroke="#444" stroke-width="1.3"/></svg>
<svg style="position:absolute;left:786.7px;top:156.4px;overflow:visible;" width="6.5" height="6.6" viewBox="0 0 6.5 6.6"><path d="M0.5 0.5l5.5 5.6M6 0.5L0.5 6.1" stroke="#444" stroke-width="1.3"/></svg>
<div style="position:absolute;left:32.80px;top:133.00px;font-family:'Liberation Sans',sans-serif;font-size:10.5px;line-height:10.5px;color:#323130;font-weight:normal;white-space:nowrap;-webkit-text-stroke:0.18px #323130;transform:scaleX(0.8193);transform-origin:0 0;">PRODUCT DEACTIVATED</div>
<div style="position:absolute;left:145.00px;top:134.00px;font-family:'Liberation Sans',sans-serif;font-size:10.4px;line-height:10.4px;color:#323130;font-weight:normal;white-space:nowrap;-webkit-text-stroke:0.18px #323130;transform:scaleX(0.8872);transform-origin:0 0;">To keep using Excel without interruption, please reactivate now.</div>
<div style="position:absolute;left:421.25px;top:129.3px;width:68.25px;height:16.5px;background:#fdfdfd;border:1px solid #bdbbb8;"></div>
<div style="position:absolute;left:433.25px;top:134.00px;font-family:'Liberation Sans',sans-serif;font-size:10.4px;line-height:10.4px;color:#323130;font-weight:normal;white-space:nowrap;-webkit-text-stroke:0.18px #323130;transform:scaleX(0.8598);transform-origin:0 0;">Reactivate</div>
<div style="position:absolute;left:433.5px;top:143.3px;width:5.8px;height:0.8px;background:#323130;"></div>
<div style="position:absolute;left:32.80px;top:154.00px;font-family:'Liberation Sans',sans-serif;font-size:10.5px;line-height:10.5px;color:#323130;font-weight:normal;white-space:nowrap;-webkit-text-stroke:0.18px #323130;transform:scaleX(0.8258);transform-origin:0 0;">SIGN IN TO OFFICE</div>
<div style="position:absolute;left:145.00px;top:155.00px;font-family:'Liberation Sans',sans-serif;font-size:10.4px;line-height:10.4px;color:#323130;font-weight:normal;white-space:nowrap;-webkit-text-stroke:0.18px #323130;transform:scaleX(0.8879);transform-origin:0 0;">It looks like your stored credentials are out of date. Please sign in as c******@th******.com so we can verify your subscription.</div>
<div style="position:absolute;left:671.75px;top:151px;width:54px;height:16.5px;background:#fdfdfd;border:1px solid #bdbbb8;"></div>
<div style="position:absolute;left:684.20px;top:155.00px;font-family:'Liberation Sans',sans-serif;font-size:10.0px;line-height:10.0px;color:#323130;font-weight:normal;white-space:nowrap;-webkit-text-stroke:0.18px #323130;transform:scaleX(0.8860);transform-origin:0 0;">Sign In</div>
<div style="position:absolute;left:684.3px;top:164.8px;width:5px;height:0.8px;background:#323130;"></div>
<div style="position:absolute;left:0px;top:171px;width:800px;height:35px;background:#e6e6e6;"></div>
<div style="position:absolute;left:5.7px;top:179.2px;width:78.6px;height:19.1px;background:#fff;border:1px solid #d4d4d4;"></div>
<div style="position:absolute;left:11.25px;top:185.00px;font-family:'Liberation Sans',sans-serif;font-size:9.4px;line-height:9.4px;color:#262626;font-weight:normal;white-space:nowrap;-webkit-text-stroke:0.18px #262626;transform:scaleX(1.0332);transform-origin:0 0;">I16</div>
<svg style="position:absolute;left:73.8px;top:187px;overflow:visible;" width="5.2" height="2.8" viewBox="0 0 5.2 2.8"><path d="M0 0h5.2L2.6 2.8z" fill="#555"/></svg>
<svg style="position:absolute;left:95.5px;top:184.8px;overflow:visible;" width="2" height="8.5" viewBox="0 0 2 8.5"><circle cx="1" cy="0.8" r="0.75" fill="#9a9a9a"/><circle cx="1" cy="4.25" r="0.75" fill="#9a9a9a"/><circle cx="1" cy="7.7" r="0.75" fill="#9a9a9a"/></svg>
<div style="position:absolute;left:108.6px;top:179.3px;width:85px;height:19px;background:#fff;border:1px solid #d4d4d4;"></div>
<svg style="position:absolute;left:119.3px;top:185.8px;overflow:visible;" width="7.6" height="7.3" viewBox="0 0 7.6 7.3"><path d="M0.4 0.4l6.8 6.5M7.2 0.4L0.4 6.9" stroke="#a6a6a6" stroke-width="1.1"/></svg>
<svg style="position:absolute;left:146.4px;top:185.8px;overflow:visible;" width="9.8" height="7.3" viewBox="0 0 9.8 7.3"><path d="M0.5 4l3 3 5.8-6.5" fill="none" stroke="#a6a6a6" stroke-width="1.1"/></svg>
<div style="position:absolute;left:174.50px;top:185.00px;font-family:'Liberation Serif',serif;font-size:10.5px;line-height:10.5px;color:#444;font-weight:normal;white-space:nowrap;-webkit-text-stroke:0.18px #444;transform:scaleX(1.0607);transform-origin:0 0;font-style:italic;">f<span style="font-size:0.72em">x</span></div>
<div style="position:absolute;left:196.3px;top:179.3px;width:601px;height:19px;background:#fff;border:1px solid #d4d4d4;"></div>
<div style="position:absolute;left:205.70px;top:185.00px;font-family:'Liberation Sans',sans-serif;font-size:10.2px;line-height:10.2px;color:#262626;font-weight:normal;white-space:nowrap;-webkit-text-stroke:0.18px #262626;transform:scaleX(0.9835);transform-origin:0 0;">113</div>
<svg style="position:absolute;left:787.5px;top:186.1px;overflow:visible;" width="7" height="5.2" viewBox="0 0 7 5.2"><path d="M1 1L3.5 4.2L6 1" fill="none" stroke="#444" stroke-width="1.2"/></svg>
<div style="position:absolute;left:0px;top:206px;width:800px;height:340px;background:#e6e6e6;"></div>
<svg style="position:absolute;left:0px;top:0px;overflow:visible;" width="800" height="585" viewBox="0 0 800 585"><rect x="19.2" y="217.5" width="765.0999999999999" height="328.1" fill="#fff"/><rect x="30.75" y="217.5" width="1" height="328.1" fill="#d9d9d9"/><rect x="154.0" y="217.5" width="1" height="328.1" fill="#d9d9d9"/><rect x="231.0" y="217.5" width="1" height="328.1" fill="#d9d9d9"/><rect x="274.5" y="217.5" width="1" height="328.1" fill="#d9d9d9"/><rect x="318.25" y="217.5" width="1" height="328.1" fill="#d9d9d9"/><rect x="361.5" y="217.5" width="1" height="328.1" fill="#d9d9d9"/><rect x="405.1" y="217.5" width="1" height="328.1" fill="#d9d9d9"/><rect x="454.0" y="217.5" width="1" height="328.1" fill="#d9d9d9"/><rect x="498.2" y="217.5" width="1" height="328.1" fill="#d9d9d9"/><rect x="542.0" y="217.5" width="1" height="328.1" fill="#d9d9d9"/><rect x="585.3" y="217.5" width="1" height="328.1" fill="#d9d9d9"/><rect x="628.9" y="217.5" width="1" height="328.1" fill="#d9d9d9"/><rect x="672.0" y="217.5" width="1" height="328.1" fill="#d9d9d9"/><rect x="715.75" y="217.5" width="1" height="328.1" fill="#d9d9d9"/><rect x="759.5" y="217.5" width="1" height="328.1" fill="#d9d9d9"/><rect x="19.2" y="228.667" width="765.0999999999999" height="1" fill="#d9d9d9"/><rect x="19.2" y="240.334" width="765.0999999999999" height="1" fill="#d9d9d9"/><rect x="19.2" y="252.001" width="765.0999999999999" height="1" fill="#d9d9d9"/><rect x="19.2" y="263.668" width="765.0999999999999" height="1" fill="#d9d9d9"/><rect x="19.2" y="275.335" width="765.0999999999999" height="1" fill="#d9d9d9"/><rect x="19.2" y="287.002" width="765.0999999999999" height="1" fill="#d9d9d9"/><rect x="19.2" y="298.669" width="765.0999999999999" height="1" fill="#d9d9d9"/><rect x="19.2" y="310.336" width="765.0999999999999" height="1" fill="#d9d9d9"/><rect x="19.2" y="322.003" width="765.0999999999999" height="1" fill="#d9d9d9"/><rect x="19.2" y="333.67" width="765.0999999999999" height="1" fill="#d9d9d9"/><rect x="19.2" y="345.337" width="765.0999999999999" height="1" fill="#d9d9d9"/><rect x="19.2" y="357.004" width="765.0999999999999" height="1" fill="#d9d9d9"/><rect x="19.2" y="368.671" width="765.0999999999999" height="1" fill="#d9d9d9"/><rect x="19.2" y="380.33799999999997" width="765.0999999999999" height="1" fill="#d9d9d9"/><rect x="19.2" y="392.005" width="765.0999999999999" height="1" fill="#d9d9d9"/><rect x="19.2" y="403.672" width="765.0999999999999" height="1" fill="#d9d9d9"/><rect x="19.2" y="415.339" width="765.0999999999999" height="1" fill="#d9d9d9"/><rect x="19.2" y="427.006" width="765.0999999999999" height="1" fill="#d9d9d9"/><rect x="19.2" y="438.673" width="765.0999999999999" height="1" fill="#d9d9d9"/><rect x="19.2" y="450.34000000000003" width="765.0999999999999" height="1" fill="#d9d9d9"/><rect x="19.2" y="462.007" width="765.0999999999999" height="1" fill="#d9d9d9"/><rect x="19.2" y="473.674" width="765.0999999999999" height="1" fill="#d9d9d9"/><rect x="19.2" y="485.341" width="765.0999999999999" height="1" fill="#d9d9d9"/><rect x="19.2" y="497.008" width="765.0999999999999" height="1" fill="#d9d9d9"/><rect x="19.2" y="508.675" width="765.0999999999999" height="1" fill="#d9d9d9"/><rect x="19.2" y="520.342" width="765.0999999999999" height="1" fill="#d9d9d9"/><rect x="19.2" y="532.009" width="765.0999999999999" height="1" fill="#d9d9d9"/><rect x="19.2" y="543.6759999999999" width="765.0999999999999" height="1" fill="#d9d9d9"/><rect x="19.2" y="217.2" width="765.0999999999999" height="23.834000000000003" fill="#4b7fc1"/><rect x="19.2" y="252.201" width="765.0999999999999" height="12.167000000000002" fill="#4b7fc1"/><rect x="19.2" y="485.541" width="765.0999999999999" height="12.166999999999973" fill="#4b7fc1"/><rect x="19.2" y="275.53499999999997" width="765.0999999999999" height="12.16700000000003" fill="#93b3da"/><rect x="19.2" y="357.204" width="765.0999999999999" height="12.166999999999973" fill="#93b3da"/><rect x="19.2" y="438.873" width="765.0999999999999" height="12.16700000000003" fill="#93b3da"/><rect x="362.5" y="299.669" width="179.5" height="45.668000000000006" fill="#ededed"/><rect x="362.5" y="381.33799999999997" width="42.60000000000002" height="22.33400000000006" fill="#ededed"/><rect x="19.2" y="239.63400000000001" width="765.0999999999999" height="1" fill="#43699c" opacity="0.55"/><rect x="19.2" y="262.968" width="765.0999999999999" height="1" fill="#43699c" opacity="0.55"/><rect x="19.2" y="496.308" width="765.0999999999999" height="1" fill="#43699c" opacity="0.55"/><rect x="361.5" y="217.5" width="1" height="328.1" fill="#a0a0a0" opacity="0.8"/><rect x="0" y="545.0" width="784.3" height="1" fill="#c6c6c6"/></svg>
<svg style="position:absolute;left:0px;top:0px;overflow:visible;" width="800" height="585" viewBox="0 0 800 585"><rect x="30.8" y="207.5" width="0.9" height="9.5" fill="#c3c3c3"/><rect x="154.05" y="207.5" width="0.9" height="9.5" fill="#c3c3c3"/><rect x="231.05" y="207.5" width="0.9" height="9.5" fill="#c3c3c3"/><rect x="274.55" y="207.5" width="0.9" height="9.5" fill="#c3c3c3"/><rect x="318.3" y="207.5" width="0.9" height="9.5" fill="#c3c3c3"/><rect x="361.55" y="207.5" width="0.9" height="9.5" fill="#c3c3c3"/><rect x="405.15000000000003" y="207.5" width="0.9" height="9.5" fill="#c3c3c3"/><rect x="454.05" y="207.5" width="0.9" height="9.5" fill="#c3c3c3"/><rect x="454.5" y="206.8" width="44.19999999999999" height="10.7" fill="#d3d3d3"/><rect x="454.5" y="216" width="44.19999999999999" height="2" fill="#1d6b3e"/><rect x="498.25" y="207.5" width="0.9" height="9.5" fill="#c3c3c3"/><rect x="542.05" y="207.5" width="0.9" height="9.5" fill="#c3c3c3"/><rect x="585.3499999999999" y="207.5" width="0.9" height="9.5" fill="#c3c3c3"/><rect x="628.9499999999999" y="207.5" width="0.9" height="9.5" fill="#c3c3c3"/><rect x="672.05" y="207.5" width="0.9" height="9.5" fill="#c3c3c3"/><rect x="715.8" y="207.5" width="0.9" height="9.5" fill="#c3c3c3"/><rect x="759.55" y="207.5" width="0.9" height="9.5" fill="#c3c3c3"/><rect x="803.55" y="207.5" width="0.9" height="9.5" fill="#c3c3c3"/><rect x="18.3" y="207.5" width="0.9" height="10" fill="#c3c3c3"/><rect x="0" y="216.6" width="784.3" height="0.9" fill="#c3c3c3"/><path d="M16.25 210.9V215H11.9z" fill="#c2c2c2"/><rect x="2" y="392.505" width="17.2" height="11.667" fill="#d3d3d3"/><rect x="18" y="392.505" width="1.5" height="11.667" fill="#1d6b3e"/><rect x="2" y="228.717" width="17" height="0.9" fill="#cfcfcf"/><rect x="2" y="240.38400000000001" width="17" height="0.9" fill="#cfcfcf"/><rect x="2" y="252.05100000000002" width="17" height="0.9" fill="#cfcfcf"/><rect x="2" y="263.718" width="17" height="0.9" fill="#cfcfcf"/><rect x="2" y="275.385" width="17" height="0.9" fill="#cfcfcf"/><rect x="2" y="287.052" width="17" height="0.9" fill="#cfcfcf"/><rect x="2" y="298.719" width="17" height="0.9" fill="#cfcfcf"/><rect x="2" y="310.386" width="17" height="0.9" fill="#cfcfcf"/><rect x="2" y="322.053" width="17" height="0.9" fill="#cfcfcf"/><rect x="2" y="333.72" width="17" height="0.9" fill="#cfcfcf"/><rect x="2" y="345.387" width="17" height="0.9" fill="#cfcfcf"/><rect x="2" y="357.05400000000003" width="17" height="0.9" fill="#cfcfcf"/><rect x="2" y="368.721" width="17" height="0.9" fill="#cfcfcf"/><rect x="2" y="380.388" width="17" height="0.9" fill="#cfcfcf"/><rect x="2" y="392.055" width="17" height="0.9" fill="#cfcfcf"/><rect x="2" y="403.72200000000004" width="17" height="0.9" fill="#cfcfcf"/><rect x="2" y="415.389" width="17" height="0.9" fill="#cfcfcf"/><rect x="2" y="427.056" width="17" height="0.9" fill="#cfcfcf"/><rect x="2" y="438.723" width="17" height="0.9" fill="#cfcfcf"/><rect x="2" y="450.39000000000004" width="17" height="0.9" fill="#cfcfcf"/><rect x="2" y="462.057" width="17" height="0.9" fill="#cfcfcf"/><rect x="2" y="473.724" width="17" height="0.9" fill="#cfcfcf"/><rect x="2" y="485.391" width="17" height="0.9" fill="#cfcfcf"/><rect x="2" y="497.058" width="17" height="0.9" fill="#cfcfcf"/><rect x="2" y="508.725" width="17" height="0.9" fill="#cfcfcf"/><rect x="2" y="520.3919999999999" width="17" height="0.9" fill="#cfcfcf"/><rect x="2" y="532.059" width="17" height="0.9" fill="#cfcfcf"/><rect x="2" y="543.7259999999999" width="17" height="0.9" fill="#cfcfcf"/><rect x="18.6" y="217.5" width="0.9" height="328.1" fill="#c3c3c3"/></svg>
<div style="position:absolute;left:22.75px;top:209.00px;font-family:'Liberation Sans',sans-serif;font-size:8.2px;line-height:8.2px;color:#262626;font-weight:normal;white-space:nowrap;-webkit-text-stroke:0.18px #262626;transform:scaleX(0.9024);transform-origin:0 0;text-shadow:0.2px 0 0 #262626;">A</div>
<div style="position:absolute;left:90.41px;top:209.00px;font-family:'Liberation Sans',sans-serif;font-size:8.2px;line-height:8.2px;color:#262626;font-weight:normal;white-space:nowrap;-webkit-text-stroke:0.18px #262626;transform:scaleX(0.9024);transform-origin:0 0;text-shadow:0.2px 0 0 #262626;">B</div>
<div style="position:absolute;left:190.34px;top:209.00px;font-family:'Liberation Sans',sans-serif;font-size:8.2px;line-height:8.2px;color:#262626;font-weight:normal;white-space:nowrap;-webkit-text-stroke:0.18px #262626;transform:scaleX(0.9024);transform-origin:0 0;text-shadow:0.2px 0 0 #262626;">C</div>
<div style="position:absolute;left:250.59px;top:209.00px;font-family:'Liberation Sans',sans-serif;font-size:8.2px;line-height:8.2px;color:#262626;font-weight:normal;white-space:nowrap;-webkit-text-stroke:0.18px #262626;transform:scaleX(0.9024);transform-origin:0 0;text-shadow:0.2px 0 0 #262626;">D</div>
<div style="position:absolute;left:294.41px;top:209.00px;font-family:'Liberation Sans',sans-serif;font-size:8.2px;line-height:8.2px;color:#262626;font-weight:normal;white-space:nowrap;-webkit-text-stroke:0.18px #262626;transform:scaleX(0.9024);transform-origin:0 0;text-shadow:0.2px 0 0 #262626;">E</div>
<div style="position:absolute;left:338.12px;top:209.00px;font-family:'Liberation Sans',sans-serif;font-size:8.2px;line-height:8.2px;color:#262626;font-weight:normal;white-space:nowrap;-webkit-text-stroke:0.18px #262626;transform:scaleX(0.9024);transform-origin:0 0;text-shadow:0.2px 0 0 #262626;">F</div>
<div style="position:absolute;left:380.91px;top:209.00px;font-family:'Liberation Sans',sans-serif;font-size:8.2px;line-height:8.2px;color:#262626;font-weight:normal;white-space:nowrap;-webkit-text-stroke:0.18px #262626;transform:scaleX(0.9024);transform-origin:0 0;text-shadow:0.2px 0 0 #262626;">G</div>
<div style="position:absolute;left:427.39px;top:209.00px;font-family:'Liberation Sans',sans-serif;font-size:8.2px;line-height:8.2px;color:#262626;font-weight:normal;white-space:nowrap;-webkit-text-stroke:0.18px #262626;transform:scaleX(0.9024);transform-origin:0 0;text-shadow:0.2px 0 0 #262626;">H</div>
<div style="position:absolute;left:474.80px;top:209.00px;font-family:'Liberation Serif',serif;font-size:8.4px;line-height:8.4px;color:#444;font-weight:normal;white-space:nowrap;-webkit-text-stroke:0.18px #444;transform:scaleX(1.2793);transform-origin:0 0;">I</div>
<div style="position:absolute;left:518.75px;top:209.00px;font-family:'Liberation Sans',sans-serif;font-size:8.2px;line-height:8.2px;color:#262626;font-weight:normal;white-space:nowrap;-webkit-text-stroke:0.18px #262626;transform:scaleX(0.9024);transform-origin:0 0;text-shadow:0.2px 0 0 #262626;">J</div>
<div style="position:absolute;left:561.69px;top:209.00px;font-family:'Liberation Sans',sans-serif;font-size:8.2px;line-height:8.2px;color:#262626;font-weight:normal;white-space:nowrap;-webkit-text-stroke:0.18px #262626;transform:scaleX(0.9024);transform-origin:0 0;text-shadow:0.2px 0 0 #262626;">K</div>
<div style="position:absolute;left:605.55px;top:209.00px;font-family:'Liberation Sans',sans-serif;font-size:8.2px;line-height:8.2px;color:#262626;font-weight:normal;white-space:nowrap;-webkit-text-stroke:0.18px #262626;transform:scaleX(0.9024);transform-origin:0 0;text-shadow:0.2px 0 0 #262626;">L</div>
<div style="position:absolute;left:647.86px;top:209.00px;font-family:'Liberation Sans',sans-serif;font-size:8.2px;line-height:8.2px;color:#262626;font-weight:normal;white-space:nowrap;-webkit-text-stroke:0.18px #262626;transform:scaleX(0.9024);transform-origin:0 0;text-shadow:0.2px 0 0 #262626;">M</div>
<div style="position:absolute;left:691.71px;top:209.00px;font-family:'Liberation Sans',sans-serif;font-size:8.2px;line-height:8.2px;color:#262626;font-weight:normal;white-space:nowrap;-webkit-text-stroke:0.18px #262626;transform:scaleX(0.9024);transform-origin:0 0;text-shadow:0.2px 0 0 #262626;">N</div>
<div style="position:absolute;left:735.24px;top:209.00px;font-family:'Liberation Sans',sans-serif;font-size:8.2px;line-height:8.2px;color:#262626;font-weight:normal;white-space:nowrap;-webkit-text-stroke:0.18px #262626;transform:scaleX(0.9024);transform-origin:0 0;text-shadow:0.2px 0 0 #262626;">O</div>
<div style="position:absolute;left:779.54px;top:209.00px;font-family:'Liberation Sans',sans-serif;font-size:8.2px;line-height:8.2px;color:#262626;font-weight:normal;white-space:nowrap;-webkit-text-stroke:0.18px #262626;transform:scaleX(0.9024);transform-origin:0 0;text-shadow:0.2px 0 0 #262626;">P</div>
<div style="position:absolute;left:8.09px;top:219.00px;font-family:'Liberation Sans',sans-serif;font-size:8.8px;line-height:8.8px;color:#262626;font-weight:normal;white-space:nowrap;-webkit-text-stroke:0.18px #262626;transform:scaleX(0.8636);transform-origin:0 0;text-shadow:0.2px 0 0 #262626;">1</div>
<div style="position:absolute;left:8.09px;top:231.00px;font-family:'Liberation Sans',sans-serif;font-size:8.8px;line-height:8.8px;color:#262626;font-weight:normal;white-space:nowrap;-webkit-text-stroke:0.18px #262626;transform:scaleX(0.8636);transform-origin:0 0;text-shadow:0.2px 0 0 #262626;">2</div>
<div style="position:absolute;left:8.09px;top:242.00px;font-family:'Liberation Sans',sans-serif;font-size:8.8px;line-height:8.8px;color:#262626;font-weight:normal;white-space:nowrap;-webkit-text-stroke:0.18px #262626;transform:scaleX(0.8636);transform-origin:0 0;text-shadow:0.2px 0 0 #262626;">3</div>
<div style="position:absolute;left:8.09px;top:254.00px;font-family:'Liberation Sans',sans-serif;font-size:8.8px;line-height:8.8px;color:#262626;font-weight:normal;white-space:nowrap;-webkit-text-stroke:0.18px #262626;transform:scaleX(0.8636);transform-origin:0 0;text-shadow:0.2px 0 0 #262626;">4</div>
<div style="position:absolute;left:8.09px;top:266.00px;font-family:'Liberation Sans',sans-serif;font-size:8.8px;line-height:8.8px;color:#262626;font-weight:normal;white-space:nowrap;-webkit-text-stroke:0.18px #262626;transform:scaleX(0.8636);transform-origin:0 0;text-shadow:0.2px 0 0 #262626;">5</div>
<div style="position:absolute;left:8.09px;top:277.00px;font-family:'Liberation Sans',sans-serif;font-size:8.8px;line-height:8.8px;color:#262626;font-weight:normal;white-space:nowrap;-webkit-text-stroke:0.18px #262626;transform:scaleX(0.8636);transform-origin:0 0;text-shadow:0.2px 0 0 #262626;">6</div>
<div style="position:absolute;left:8.09px;top:289.00px;font-family:'Liberation Sans',sans-serif;font-size:8.8px;line-height:8.8px;color:#262626;font-weight:normal;white-space:nowrap;-webkit-text-stroke:0.18px #262626;transform:scaleX(0.8636);transform-origin:0 0;text-shadow:0.2px 0 0 #262626;">7</div>
<div style="position:absolute;left:8.09px;top:301.00px;font-family:'Liberation Sans',sans-serif;font-size:8.8px;line-height:8.8px;color:#262626;font-weight:normal;white-space:nowrap;-webkit-text-stroke:0.18px #262626;transform:scaleX(0.8636);transform-origin:0 0;text-shadow:0.2px 0 0 #262626;">8</div>
<div style="position:absolute;left:8.09px;top:312.00px;font-family:'Liberation Sans',sans-serif;font-size:8.8px;line-height:8.8px;color:#262626;font-weight:normal;white-space:nowrap;-webkit-text-stroke:0.18px #262626;transform:scaleX(0.8636);transform-origin:0 0;text-shadow:0.2px 0 0 #262626;">9</div>
<div style="position:absolute;left:5.98px;top:324.00px;font-family:'Liberation Sans',sans-serif;font-size:8.8px;line-height:8.8px;color:#262626;font-weight:normal;white-space:nowrap;-webkit-text-stroke:0.18px #262626;transform:scaleX(0.8636);transform-origin:0 0;text-shadow:0.2px 0 0 #262626;">10</div>
<div style="position:absolute;left:6.25px;top:336.00px;font-family:'Liberation Sans',sans-serif;font-size:8.8px;line-height:8.8px;color:#262626;font-weight:normal;white-space:nowrap;-webkit-text-stroke:0.18px #262626;transform:scaleX(0.8636);transform-origin:0 0;text-shadow:0.2px 0 0 #262626;">11</div>
<div style="position:absolute;left:5.98px;top:347.00px;font-family:'Liberation Sans',sans-serif;font-size:8.8px;line-height:8.8px;color:#262626;font-weight:normal;white-space:nowrap;-webkit-text-stroke:0.18px #262626;transform:scaleX(0.8636);transform-origin:0 0;text-shadow:0.2px 0 0 #262626;">12</div>
<div style="position:absolute;left:5.98px;top:359.00px;font-family:'Liberation Sans',sans-serif;font-size:8.8px;line-height:8.8px;color:#262626;font-weight:normal;white-space:nowrap;-webkit-text-stroke:0.18px #262626;transform:scaleX(0.8636);transform-origin:0 0;text-shadow:0.2px 0 0 #262626;">13</div>
<div style="position:absolute;left:5.98px;top:371.00px;font-family:'Liberation Sans',sans-serif;font-size:8.8px;line-height:8.8px;color:#262626;font-weight:normal;white-space:nowrap;-webkit-text-stroke:0.18px #262626;transform:scaleX(0.8636);transform-origin:0 0;text-shadow:0.2px 0 0 #262626;">14</div>
<div style="position:absolute;left:5.98px;top:382.00px;font-family:'Liberation Sans',sans-serif;font-size:8.8px;line-height:8.8px;color:#262626;font-weight:normal;white-space:nowrap;-webkit-text-stroke:0.18px #262626;transform:scaleX(0.8636);transform-origin:0 0;text-shadow:0.2px 0 0 #262626;">15</div>
<div style="position:absolute;left:5.98px;top:394.00px;font-family:'Liberation Sans',sans-serif;font-size:8.8px;line-height:8.8px;color:#1e6b40;font-weight:normal;white-space:nowrap;-webkit-text-stroke:0.18px #1e6b40;transform:scaleX(0.8636);transform-origin:0 0;text-shadow:0.2px 0 0 #1e6b40;">16</div>
<div style="position:absolute;left:5.98px;top:406.00px;font-family:'Liberation Sans',sans-serif;font-size:8.8px;line-height:8.8px;color:#262626;font-weight:normal;white-space:nowrap;-webkit-text-stroke:0.18px #262626;transform:scaleX(0.8636);transform-origin:0 0;text-shadow:0.2px 0 0 #262626;">17</div>
<div style="position:absolute;left:5.98px;top:417.00px;font-family:'Liberation Sans',sans-serif;font-size:8.8px;line-height:8.8px;color:#262626;font-weight:normal;white-space:nowrap;-webkit-text-stroke:0.18px #262626;transform:scaleX(0.8636);transform-origin:0 0;text-shadow:0.2px 0 0 #262626;">18</div>
<div style="position:absolute;left:5.98px;top:429.00px;font-family:'Liberation Sans',sans-serif;font-size:8.8px;line-height:8.8px;color:#262626;font-weight:normal;white-space:nowrap;-webkit-text-stroke:0.18px #262626;transform:scaleX(0.8636);transform-origin:0 0;text-shadow:0.2px 0 0 #262626;">19</div>
<div style="position:absolute;left:5.98px;top:441.00px;font-family:'Liberation Sans',sans-serif;font-size:8.8px;line-height:8.8px;color:#262626;font-weight:normal;white-space:nowrap;-webkit-text-stroke:0.18px #262626;transform:scaleX(0.8636);transform-origin:0 0;text-shadow:0.2px 0 0 #262626;">20</div>
<div style="position:absolute;left:5.98px;top:452.00px;font-family:'Liberation Sans',sans-serif;font-size:8.8px;line-height:8.8px;color:#262626;font-weight:normal;white-space:nowrap;-webkit-text-stroke:0.18px #262626;transform:scaleX(0.8636);transform-origin:0 0;text-shadow:0.2px 0 0 #262626;">21</div>
<div style="position:absolute;left:5.98px;top:464.00px;font-family:'Liberation Sans',sans-serif;font-size:8.8px;line-height:8.8px;color:#262626;font-weight:normal;white-space:nowrap;-webkit-text-stroke:0.18px #262626;transform:scaleX(0.8636);transform-origin:0 0;text-shadow:0.2px 0 0 #262626;">22</div>
<div style="position:absolute;left:5.98px;top:476.00px;font-family:'Liberation Sans',sans-serif;font-size:8.8px;line-height:8.8px;color:#262626;font-weight:normal;white-space:nowrap;-webkit-text-stroke:0.18px #262626;transform:scaleX(0.8636);transform-origin:0 0;text-shadow:0.2px 0 0 #262626;">23</div>
<div style="position:absolute;left:5.98px;top:487.00px;font-family:'Liberation Sans',sans-serif;font-size:8.8px;line-height:8.8px;color:#262626;font-weight:normal;white-space:nowrap;-webkit-text-stroke:0.18px #262626;transform:scaleX(0.8636);transform-origin:0 0;text-shadow:0.2px 0 0 #262626;">24</div>
<div style="position:absolute;left:5.98px;top:499.00px;font-family:'Liberation Sans',sans-serif;font-size:8.8px;line-height:8.8px;color:#262626;font-weight:normal;white-space:nowrap;-webkit-text-stroke:0.18px #262626;transform:scaleX(0.8636);transform-origin:0 0;text-shadow:0.2px 0 0 #262626;">25</div>
<div style="position:absolute;left:5.98px;top:511.00px;font-family:'Liberation Sans',sans-serif;font-size:8.8px;line-height:8.8px;color:#262626;font-weight:normal;white-space:nowrap;-webkit-text-stroke:0.18px #262626;transform:scaleX(0.8636);transform-origin:0 0;text-shadow:0.2px 0 0 #262626;">26</div>
<div style="position:absolute;left:5.98px;top:522.00px;font-family:'Liberation Sans',sans-serif;font-size:8.8px;line-height:8.8px;color:#262626;font-weight:normal;white-space:nowrap;-webkit-text-stroke:0.18px #262626;transform:scaleX(0.8636);transform-origin:0 0;text-shadow:0.2px 0 0 #262626;">27</div>
<div style="position:absolute;left:5.98px;top:534.00px;font-family:'Liberation Sans',sans-serif;font-size:8.8px;line-height:8.8px;color:#262626;font-weight:normal;white-space:nowrap;-webkit-text-stroke:0.18px #262626;transform:scaleX(0.8636);transform-origin:0 0;text-shadow:0.2px 0 0 #262626;">28</div>
<div style="position:absolute;left:33.75px;top:219.00px;font-size:8.35px;line-height:8.35px;color:#ffffff;font-weight:normal;white-space:nowrap;-webkit-text-stroke:0.15px #ffffff;transform:scaleX(0.9828);transform-origin:0 0;">Financial Statements</div>
<div style="position:absolute;left:33.75px;top:231.00px;font-size:8.35px;line-height:8.35px;color:#ffffff;font-weight:normal;white-space:nowrap;-webkit-text-stroke:0.15px #ffffff;transform:scaleX(0.9874);transform-origin:0 0;">Model status</div>
<div style="position:absolute;left:157.00px;top:231.00px;font-size:8.35px;line-height:8.35px;color:#ffffff;font-weight:normal;white-space:nowrap;-webkit-text-stroke:0.15px #ffffff;transform:scaleX(0.9979);transform-origin:0 0;">Going concern</div>
<div style="position:absolute;left:33.45px;top:254.00px;font-size:8.35px;line-height:8.35px;color:#ffffff;font-weight:normal;white-space:nowrap;-webkit-text-stroke:0.15px #ffffff;">Balance sheet</div>
<div style="position:absolute;left:33.75px;top:278.00px;font-size:8.35px;line-height:8.35px;color:#ffffff;font-weight:normal;white-space:nowrap;-webkit-text-stroke:0.15px #ffffff;transform:scaleX(1.0599);transform-origin:0 0;">Assets</div>
<div style="position:absolute;left:33.75px;top:359.00px;font-size:8.35px;line-height:8.35px;color:#ffffff;font-weight:normal;white-space:nowrap;-webkit-text-stroke:0.15px #ffffff;transform:scaleX(0.9560);transform-origin:0 0;">Liabilities</div>
<div style="position:absolute;left:33.75px;top:441.00px;font-size:8.35px;line-height:8.35px;color:#ffffff;font-weight:normal;white-space:nowrap;-webkit-text-stroke:0.15px #ffffff;transform:scaleX(0.9542);transform-origin:0 0;">Equity</div>
<div style="position:absolute;left:33.75px;top:488.00px;font-size:8.35px;line-height:8.35px;color:#ffffff;font-weight:normal;white-space:nowrap;-webkit-text-stroke:0.15px #ffffff;transform:scaleX(1.0123);transform-origin:0 0;">Profit and loss</div>
<div style="position:absolute;left:33.75px;top:301.00px;font-size:8.35px;line-height:8.35px;color:#000;font-weight:normal;white-space:nowrap;-webkit-text-stroke:0.15px #000;transform:scaleX(1.0096);transform-origin:0 0;">Cash and cash equivalents</div>
<div style="position:absolute;left:33.75px;top:313.00px;font-size:8.35px;line-height:8.35px;color:#000;font-weight:normal;white-space:nowrap;-webkit-text-stroke:0.15px #000;transform:scaleX(1.0337);transform-origin:0 0;">Accounts receivable</div>
<div style="position:absolute;left:33.75px;top:324.00px;font-size:8.35px;line-height:8.35px;color:#000;font-weight:normal;white-space:nowrap;-webkit-text-stroke:0.15px #000;transform:scaleX(0.9976);transform-origin:0 0;">Property, plant and equipment</div>
<div style="position:absolute;left:33.75px;top:336.00px;font-size:8.35px;line-height:8.35px;color:#000;font-weight:normal;white-space:nowrap;-webkit-text-stroke:0.15px #000;transform:scaleX(0.9933);transform-origin:0 0;">Intangible assets</div>
<div style="position:absolute;left:33.75px;top:383.00px;font-size:8.35px;line-height:8.35px;color:#000;font-weight:normal;white-space:nowrap;-webkit-text-stroke:0.15px #000;transform:scaleX(1.0353);transform-origin:0 0;">Accounts payable</div>
<div style="position:absolute;left:33.75px;top:394.00px;font-size:8.35px;line-height:8.35px;color:#000;font-weight:normal;white-space:nowrap;-webkit-text-stroke:0.15px #000;transform:scaleX(0.9926);transform-origin:0 0;">Provisions</div>
<div style="position:absolute;left:33.75px;top:406.00px;font-size:8.35px;line-height:8.35px;color:#000;font-weight:normal;white-space:nowrap;-webkit-text-stroke:0.15px #000;transform:scaleX(0.9547);transform-origin:0 0;">Financial liabilities</div>
<div style="position:absolute;left:33.75px;top:418.00px;font-size:8.35px;line-height:8.35px;color:#000;font-weight:normal;white-space:nowrap;-webkit-text-stroke:0.15px #000;transform:scaleX(1.0279);transform-origin:0 0;">Deferred tax</div>
<div style="position:absolute;left:33.75px;top:464.00px;font-size:8.35px;line-height:8.35px;color:#000;font-weight:normal;white-space:nowrap;-webkit-text-stroke:0.15px #000;transform:scaleX(0.9542);transform-origin:0 0;">Equity</div>
<div style="position:absolute;left:40.75px;top:511.00px;font-size:8.35px;line-height:8.35px;color:#000;font-weight:normal;white-space:nowrap;-webkit-text-stroke:0.15px #000;transform:scaleX(0.9793);transform-origin:0 0;">Revenue</div>
<div style="position:absolute;left:40.75px;top:523.00px;font-size:8.35px;line-height:8.35px;color:#000;font-weight:normal;white-space:nowrap;-webkit-text-stroke:0.15px #000;transform:scaleX(1.0205);transform-origin:0 0;">Cost of sales</div>
<div style="position:absolute;left:33.75px;top:534.00px;font-size:8.35px;line-height:8.35px;color:#000;font-weight:bold;white-space:nowrap;-webkit-text-stroke:0.15px #000;transform:scaleX(1.0888);transform-origin:0 0;">Gross profit</div>
<div style="position:absolute;left:282px;top:231.00px;width:121.90000000000002px;text-align:right;font-size:8.35px;line-height:8.35px;color:#ffffff;font-weight:normal;white-space:nowrap;-webkit-text-stroke:0.15px #ffffff;">ม.ค.-14</div>
<div style="position:absolute;left:325.6px;top:231.00px;width:127.19999999999997px;text-align:right;font-size:8.35px;line-height:8.35px;color:#ffffff;font-weight:normal;white-space:nowrap;-webkit-text-stroke:0.15px #ffffff;">ก.พ.-14</div>
<div style="position:absolute;left:374.5px;top:231.00px;width:122.49999999999999px;text-align:right;font-size:8.35px;line-height:8.35px;color:#ffffff;font-weight:normal;white-space:nowrap;-webkit-text-stroke:0.15px #ffffff;">มี.ค.-14</div>
<div style="position:absolute;left:418.7px;top:231.00px;width:122.10000000000001px;text-align:right;font-size:8.35px;line-height:8.35px;color:#ffffff;font-weight:normal;white-space:nowrap;-webkit-text-stroke:0.15px #ffffff;">เม.ย.-14</div>
<div style="position:absolute;left:462.5px;top:231.00px;width:121.59999999999995px;text-align:right;font-size:8.35px;line-height:8.35px;color:#ffffff;font-weight:normal;white-space:nowrap;-webkit-text-stroke:0.15px #ffffff;">พ.ค.-14</div>
<div style="position:absolute;left:505.79999999999995px;top:231.00px;width:121.90000000000002px;text-align:right;font-size:8.35px;line-height:8.35px;color:#ffffff;font-weight:normal;white-space:nowrap;-webkit-text-stroke:0.15px #ffffff;">มิ.ย.-14</div>
<div style="position:absolute;left:549.4px;top:231.00px;width:121.40000000000002px;text-align:right;font-size:8.35px;line-height:8.35px;color:#ffffff;font-weight:normal;white-space:nowrap;-webkit-text-stroke:0.15px #ffffff;">ก.ค.-14</div>
<div style="position:absolute;left:592.5px;top:231.00px;width:122.05px;text-align:right;font-size:8.35px;line-height:8.35px;color:#ffffff;font-weight:normal;white-space:nowrap;-webkit-text-stroke:0.15px #ffffff;">ส.ค.-14</div>
<div style="position:absolute;left:636.25px;top:231.00px;width:122.05px;text-align:right;font-size:8.35px;line-height:8.35px;color:#ffffff;font-weight:normal;white-space:nowrap;-webkit-text-stroke:0.15px #ffffff;">ก.ย.-14</div>
<div style="position:absolute;left:282px;top:278.00px;width:121.90000000000002px;text-align:right;font-size:8.35px;line-height:8.35px;color:#ffffff;font-weight:normal;white-space:nowrap;-webkit-text-stroke:0.15px #ffffff;">60</div>
<div style="position:absolute;left:325.6px;top:278.00px;width:127.19999999999997px;text-align:right;font-size:8.35px;line-height:8.35px;color:#ffffff;font-weight:normal;white-space:nowrap;-webkit-text-stroke:0.15px #ffffff;">24</div>
<div style="position:absolute;left:374.5px;top:278.00px;width:122.49999999999999px;text-align:right;font-size:8.35px;line-height:8.35px;color:#ffffff;font-weight:normal;white-space:nowrap;-webkit-text-stroke:0.15px #ffffff;">8</div>
<div style="position:absolute;left:418.7px;top:278.00px;width:122.10000000000001px;text-align:right;font-size:8.35px;line-height:8.35px;color:#ffffff;font-weight:normal;white-space:nowrap;-webkit-text-stroke:0.15px #ffffff;">4</div>
<div style="position:absolute;left:462.5px;top:278.00px;width:121.59999999999995px;text-align:right;font-size:8.35px;line-height:8.35px;color:#ffffff;font-weight:normal;white-space:nowrap;-webkit-text-stroke:0.15px #ffffff;">2,805</div>
<div style="position:absolute;left:505.79999999999995px;top:278.00px;width:121.90000000000002px;text-align:right;font-size:8.35px;line-height:8.35px;color:#ffffff;font-weight:normal;white-space:nowrap;-webkit-text-stroke:0.15px #ffffff;">5,629</div>
<div style="position:absolute;left:549.4px;top:278.00px;width:121.40000000000002px;text-align:right;font-size:8.35px;line-height:8.35px;color:#ffffff;font-weight:normal;white-space:nowrap;-webkit-text-stroke:0.15px #ffffff;">3,484</div>
<div style="position:absolute;left:592.5px;top:278.00px;width:122.05px;text-align:right;font-size:8.35px;line-height:8.35px;color:#ffffff;font-weight:normal;white-space:nowrap;-webkit-text-stroke:0.15px #ffffff;">2,333</div>
<div style="position:absolute;left:636.25px;top:278.00px;width:122.05px;text-align:right;font-size:8.35px;line-height:8.35px;color:#ffffff;font-weight:normal;white-space:nowrap;-webkit-text-stroke:0.15px #ffffff;">1,980</div>
<div style="position:absolute;left:282px;top:301.00px;width:121.90000000000002px;text-align:right;font-size:8.35px;line-height:8.35px;color:#000;font-weight:normal;white-space:nowrap;-webkit-text-stroke:0.15px #000;">4</div>
<div style="position:absolute;left:462.5px;top:301.00px;width:121.59999999999995px;text-align:right;font-size:8.35px;line-height:8.35px;color:#000;font-weight:normal;white-space:nowrap;-webkit-text-stroke:0.15px #000;">12</div>
<div style="position:absolute;left:505.79999999999995px;top:301.00px;width:121.90000000000002px;text-align:right;font-size:8.35px;line-height:8.35px;color:#000;font-weight:normal;white-space:nowrap;-webkit-text-stroke:0.15px #000;">1,901</div>
<div style="position:absolute;left:549.4px;top:301.00px;width:121.40000000000002px;text-align:right;font-size:8.35px;line-height:8.35px;color:#000;font-weight:normal;white-space:nowrap;-webkit-text-stroke:0.15px #000;">1,783</div>
<div style="position:absolute;left:592.5px;top:301.00px;width:122.05px;text-align:right;font-size:8.35px;line-height:8.35px;color:#000;font-weight:normal;white-space:nowrap;-webkit-text-stroke:0.15px #000;">1,050</div>
<div style="position:absolute;left:636.25px;top:301.00px;width:122.05px;text-align:right;font-size:8.35px;line-height:8.35px;color:#000;font-weight:normal;white-space:nowrap;-webkit-text-stroke:0.15px #000;">112</div>
<div style="position:absolute;left:282px;top:313.00px;width:121.90000000000002px;text-align:right;font-size:8.35px;line-height:8.35px;color:#000;font-weight:normal;white-space:nowrap;-webkit-text-stroke:0.15px #000;">8</div>
<div style="position:absolute;left:325.6px;top:313.00px;width:127.19999999999997px;text-align:right;font-size:8.35px;line-height:8.35px;color:#000;font-weight:normal;white-space:nowrap;-webkit-text-stroke:0.15px #000;">4</div>
<div style="position:absolute;left:462.5px;top:313.00px;width:121.59999999999995px;text-align:right;font-size:8.35px;line-height:8.35px;color:#000;font-weight:normal;white-space:nowrap;-webkit-text-stroke:0.15px #000;">186</div>
<div style="position:absolute;left:505.79999999999995px;top:313.00px;width:121.90000000000002px;text-align:right;font-size:8.35px;line-height:8.35px;color:#000;font-weight:normal;white-space:nowrap;-webkit-text-stroke:0.15px #000;">565</div>
<div style="position:absolute;left:549.4px;top:313.00px;width:121.40000000000002px;text-align:right;font-size:8.35px;line-height:8.35px;color:#000;font-weight:normal;white-space:nowrap;-webkit-text-stroke:0.15px #000;">1,133</div>
<div style="position:absolute;left:592.5px;top:313.00px;width:122.05px;text-align:right;font-size:8.35px;line-height:8.35px;color:#000;font-weight:normal;white-space:nowrap;-webkit-text-stroke:0.15px #000;">249</div>
<div style="position:absolute;left:636.25px;top:313.00px;width:122.05px;text-align:right;font-size:8.35px;line-height:8.35px;color:#000;font-weight:normal;white-space:nowrap;-webkit-text-stroke:0.15px #000;">1,318</div>
<div style="position:absolute;left:282px;top:324.00px;width:121.90000000000002px;text-align:right;font-size:8.35px;line-height:8.35px;color:#000;font-weight:normal;white-space:nowrap;-webkit-text-stroke:0.15px #000;">16</div>
<div style="position:absolute;left:325.6px;top:324.00px;width:127.19999999999997px;text-align:right;font-size:8.35px;line-height:8.35px;color:#000;font-weight:normal;white-space:nowrap;-webkit-text-stroke:0.15px #000;">4</div>
<div style="position:absolute;left:462.5px;top:324.00px;width:121.59999999999995px;text-align:right;font-size:8.35px;line-height:8.35px;color:#000;font-weight:normal;white-space:nowrap;-webkit-text-stroke:0.15px #000;">1,872</div>
<div style="position:absolute;left:505.79999999999995px;top:324.00px;width:121.90000000000002px;text-align:right;font-size:8.35px;line-height:8.35px;color:#000;font-weight:normal;white-space:nowrap;-webkit-text-stroke:0.15px #000;">1,848</div>
<div style="position:absolute;left:549.4px;top:324.00px;width:121.40000000000002px;text-align:right;font-size:8.35px;line-height:8.35px;color:#000;font-weight:normal;white-space:nowrap;-webkit-text-stroke:0.15px #000;">335</div>
<div style="position:absolute;left:592.5px;top:324.00px;width:122.05px;text-align:right;font-size:8.35px;line-height:8.35px;color:#000;font-weight:normal;white-space:nowrap;-webkit-text-stroke:0.15px #000;">622</div>
<div style="position:absolute;left:636.25px;top:324.00px;width:122.05px;text-align:right;font-size:8.35px;line-height:8.35px;color:#000;font-weight:normal;white-space:nowrap;-webkit-text-stroke:0.15px #000;">154</div>
<div style="position:absolute;left:282px;top:336.00px;width:121.90000000000002px;text-align:right;font-size:8.35px;line-height:8.35px;color:#000;font-weight:normal;white-space:nowrap;-webkit-text-stroke:0.15px #000;">32</div>
<div style="position:absolute;left:325.6px;top:336.00px;width:127.19999999999997px;text-align:right;font-size:8.35px;line-height:8.35px;color:#000;font-weight:normal;white-space:nowrap;-webkit-text-stroke:0.15px #000;">16</div>
<div style="position:absolute;left:374.5px;top:336.00px;width:122.49999999999999px;text-align:right;font-size:8.35px;line-height:8.35px;color:#000;font-weight:normal;white-space:nowrap;-webkit-text-stroke:0.15px #000;">8</div>
<div style="position:absolute;left:418.7px;top:336.00px;width:122.10000000000001px;text-align:right;font-size:8.35px;line-height:8.35px;color:#000;font-weight:normal;white-space:nowrap;-webkit-text-stroke:0.15px #000;">4</div>
<div style="position:absolute;left:462.5px;top:336.00px;width:121.59999999999995px;text-align:right;font-size:8.35px;line-height:8.35px;color:#000;font-weight:normal;white-space:nowrap;-webkit-text-stroke:0.15px #000;">735</div>
<div style="position:absolute;left:505.79999999999995px;top:336.00px;width:121.90000000000002px;text-align:right;font-size:8.35px;line-height:8.35px;color:#000;font-weight:normal;white-space:nowrap;-webkit-text-stroke:0.15px #000;">1,315</div>
<div style="position:absolute;left:549.4px;top:336.00px;width:121.40000000000002px;text-align:right;font-size:8.35px;line-height:8.35px;color:#000;font-weight:normal;white-space:nowrap;-webkit-text-stroke:0.15px #000;">233</div>
<div style="position:absolute;left:592.5px;top:336.00px;width:122.05px;text-align:right;font-size:8.35px;line-height:8.35px;color:#000;font-weight:normal;white-space:nowrap;-webkit-text-stroke:0.15px #000;">412</div>
<div style="position:absolute;left:636.25px;top:336.00px;width:122.05px;text-align:right;font-size:8.35px;line-height:8.35px;color:#000;font-weight:normal;white-space:nowrap;-webkit-text-stroke:0.15px #000;">396</div>
<div style="position:absolute;left:282px;top:359.00px;width:121.90000000000002px;text-align:right;font-size:8.35px;line-height:8.35px;color:#ffffff;font-weight:normal;white-space:nowrap;-webkit-text-stroke:0.15px #ffffff;">3,086</div>
<div style="position:absolute;left:325.6px;top:359.00px;width:127.19999999999997px;text-align:right;font-size:8.35px;line-height:8.35px;color:#ffffff;font-weight:normal;white-space:nowrap;-webkit-text-stroke:0.15px #ffffff;">4,100</div>
<div style="position:absolute;left:374.5px;top:359.00px;width:122.49999999999999px;text-align:right;font-size:8.35px;line-height:8.35px;color:#ffffff;font-weight:normal;white-space:nowrap;-webkit-text-stroke:0.15px #ffffff;">3,720</div>
<div style="position:absolute;left:418.7px;top:359.00px;width:122.10000000000001px;text-align:right;font-size:8.35px;line-height:8.35px;color:#ffffff;font-weight:normal;white-space:nowrap;-webkit-text-stroke:0.15px #ffffff;">4,045</div>
<div style="position:absolute;left:462.5px;top:359.00px;width:121.59999999999995px;text-align:right;font-size:8.35px;line-height:8.35px;color:#ffffff;font-weight:normal;white-space:nowrap;-webkit-text-stroke:0.15px #ffffff;">2,776</div>
<div style="position:absolute;left:505.79999999999995px;top:359.00px;width:121.90000000000002px;text-align:right;font-size:8.35px;line-height:8.35px;color:#ffffff;font-weight:normal;white-space:nowrap;-webkit-text-stroke:0.15px #ffffff;">3,542</div>
<div style="position:absolute;left:549.4px;top:359.00px;width:121.40000000000002px;text-align:right;font-size:8.35px;line-height:8.35px;color:#ffffff;font-weight:normal;white-space:nowrap;-webkit-text-stroke:0.15px #ffffff;">3,630</div>
<div style="position:absolute;left:592.5px;top:359.00px;width:122.05px;text-align:right;font-size:8.35px;line-height:8.35px;color:#ffffff;font-weight:normal;white-space:nowrap;-webkit-text-stroke:0.15px #ffffff;">5,907</div>
<div style="position:absolute;left:636.25px;top:359.00px;width:122.05px;text-align:right;font-size:8.35px;line-height:8.35px;color:#ffffff;font-weight:normal;white-space:nowrap;-webkit-text-stroke:0.15px #ffffff;">2,807</div>
<div style="position:absolute;left:282px;top:383.00px;width:121.90000000000002px;text-align:right;font-size:8.35px;line-height:8.35px;color:#000;font-weight:normal;white-space:nowrap;-webkit-text-stroke:0.15px #000;">212</div>
<div style="position:absolute;left:325.6px;top:383.00px;width:127.19999999999997px;text-align:right;font-size:8.35px;line-height:8.35px;color:#000;font-weight:normal;white-space:nowrap;-webkit-text-stroke:0.15px #000;">270</div>
<div style="position:absolute;left:374.5px;top:383.00px;width:122.49999999999999px;text-align:right;font-size:8.35px;line-height:8.35px;color:#000;font-weight:normal;white-space:nowrap;-webkit-text-stroke:0.15px #000;">1,677</div>
<div style="position:absolute;left:418.7px;top:383.00px;width:122.10000000000001px;text-align:right;font-size:8.35px;line-height:8.35px;color:#000;font-weight:normal;white-space:nowrap;-webkit-text-stroke:0.15px #000;">1,553</div>
<div style="position:absolute;left:462.5px;top:383.00px;width:121.59999999999995px;text-align:right;font-size:8.35px;line-height:8.35px;color:#000;font-weight:normal;white-space:nowrap;-webkit-text-stroke:0.15px #000;">142</div>
<div style="position:absolute;left:505.79999999999995px;top:383.00px;width:121.90000000000002px;text-align:right;font-size:8.35px;line-height:8.35px;color:#000;font-weight:normal;white-space:nowrap;-webkit-text-stroke:0.15px #000;">1,855</div>
<div style="position:absolute;left:549.4px;top:383.00px;width:121.40000000000002px;text-align:right;font-size:8.35px;line-height:8.35px;color:#000;font-weight:normal;white-space:nowrap;-webkit-text-stroke:0.15px #000;">133</div>
<div style="position:absolute;left:592.5px;top:383.00px;width:122.05px;text-align:right;font-size:8.35px;line-height:8.35px;color:#000;font-weight:normal;white-space:nowrap;-webkit-text-stroke:0.15px #000;">1,270</div>
<div style="position:absolute;left:636.25px;top:383.00px;width:122.05px;text-align:right;font-size:8.35px;line-height:8.35px;color:#000;font-weight:normal;white-space:nowrap;-webkit-text-stroke:0.15px #000;">309</div>
<div style="position:absolute;left:282px;top:394.00px;width:121.90000000000002px;text-align:right;font-size:8.35px;line-height:8.35px;color:#000;font-weight:normal;white-space:nowrap;-webkit-text-stroke:0.15px #000;">-</div>
<div style="position:absolute;left:325.6px;top:394.00px;width:127.19999999999997px;text-align:right;font-size:8.35px;line-height:8.35px;color:#000;font-weight:normal;white-space:nowrap;-webkit-text-stroke:0.15px #000;">1,683</div>
<div style="position:absolute;left:374.5px;top:394.00px;width:122.49999999999999px;text-align:right;font-size:8.35px;line-height:8.35px;color:#000;font-weight:normal;white-space:nowrap;-webkit-text-stroke:0.15px #000;">113</div>
<div style="position:absolute;left:418.7px;top:394.00px;width:122.10000000000001px;text-align:right;font-size:8.35px;line-height:8.35px;color:#000;font-weight:normal;white-space:nowrap;-webkit-text-stroke:0.15px #000;">1,291</div>
<div style="position:absolute;left:462.5px;top:394.00px;width:121.59999999999995px;text-align:right;font-size:8.35px;line-height:8.35px;color:#000;font-weight:normal;white-space:nowrap;-webkit-text-stroke:0.15px #000;">1,426</div>
<div style="position:absolute;left:505.79999999999995px;top:394.00px;width:121.90000000000002px;text-align:right;font-size:8.35px;line-height:8.35px;color:#000;font-weight:normal;white-space:nowrap;-webkit-text-stroke:0.15px #000;">341</div>
<div style="position:absolute;left:549.4px;top:394.00px;width:121.40000000000002px;text-align:right;font-size:8.35px;line-height:8.35px;color:#000;font-weight:normal;white-space:nowrap;-webkit-text-stroke:0.15px #000;">545</div>
<div style="position:absolute;left:592.5px;top:394.00px;width:122.05px;text-align:right;font-size:8.35px;line-height:8.35px;color:#000;font-weight:normal;white-space:nowrap;-webkit-text-stroke:0.15px #000;">1,865</div>
<div style="position:absolute;left:636.25px;top:394.00px;width:122.05px;text-align:right;font-size:8.35px;line-height:8.35px;color:#000;font-weight:normal;white-space:nowrap;-webkit-text-stroke:0.15px #000;">502</div>
<div style="position:absolute;left:282px;top:406.00px;width:121.90000000000002px;text-align:right;font-size:8.35px;line-height:8.35px;color:#000;font-weight:normal;white-space:nowrap;-webkit-text-stroke:0.15px #000;">993</div>
<div style="position:absolute;left:325.6px;top:406.00px;width:127.19999999999997px;text-align:right;font-size:8.35px;line-height:8.35px;color:#000;font-weight:normal;white-space:nowrap;-webkit-text-stroke:0.15px #000;">373</div>
<div style="position:absolute;left:374.5px;top:406.00px;width:122.49999999999999px;text-align:right;font-size:8.35px;line-height:8.35px;color:#000;font-weight:normal;white-space:nowrap;-webkit-text-stroke:0.15px #000;">507</div>
<div style="position:absolute;left:418.7px;top:406.00px;width:122.10000000000001px;text-align:right;font-size:8.35px;line-height:8.35px;color:#000;font-weight:normal;white-space:nowrap;-webkit-text-stroke:0.15px #000;">378</div>
<div style="position:absolute;left:462.5px;top:406.00px;width:121.59999999999995px;text-align:right;font-size:8.35px;line-height:8.35px;color:#000;font-weight:normal;white-space:nowrap;-webkit-text-stroke:0.15px #000;">589</div>
<div style="position:absolute;left:505.79999999999995px;top:406.00px;width:121.90000000000002px;text-align:right;font-size:8.35px;line-height:8.35px;color:#000;font-weight:normal;white-space:nowrap;-webkit-text-stroke:0.15px #000;">820</div>
<div style="position:absolute;left:549.4px;top:406.00px;width:121.40000000000002px;text-align:right;font-size:8.35px;line-height:8.35px;color:#000;font-weight:normal;white-space:nowrap;-webkit-text-stroke:0.15px #000;">1,701</div>
<div style="position:absolute;left:592.5px;top:406.00px;width:122.05px;text-align:right;font-size:8.35px;line-height:8.35px;color:#000;font-weight:normal;white-space:nowrap;-webkit-text-stroke:0.15px #000;">896</div>
<div style="position:absolute;left:636.25px;top:406.00px;width:122.05px;text-align:right;font-size:8.35px;line-height:8.35px;color:#000;font-weight:normal;white-space:nowrap;-webkit-text-stroke:0.15px #000;">1,162</div>
<div style="position:absolute;left:282px;top:418.00px;width:121.90000000000002px;text-align:right;font-size:8.35px;line-height:8.35px;color:#000;font-weight:normal;white-space:nowrap;-webkit-text-stroke:0.15px #000;">1,881</div>
<div style="position:absolute;left:325.6px;top:418.00px;width:127.19999999999997px;text-align:right;font-size:8.35px;line-height:8.35px;color:#000;font-weight:normal;white-space:nowrap;-webkit-text-stroke:0.15px #000;">1,774</div>
<div style="position:absolute;left:374.5px;top:418.00px;width:122.49999999999999px;text-align:right;font-size:8.35px;line-height:8.35px;color:#000;font-weight:normal;white-space:nowrap;-webkit-text-stroke:0.15px #000;">1,423</div>
<div style="position:absolute;left:418.7px;top:418.00px;width:122.10000000000001px;text-align:right;font-size:8.35px;line-height:8.35px;color:#000;font-weight:normal;white-space:nowrap;-webkit-text-stroke:0.15px #000;">823</div>
<div style="position:absolute;left:462.5px;top:418.00px;width:121.59999999999995px;text-align:right;font-size:8.35px;line-height:8.35px;color:#000;font-weight:normal;white-space:nowrap;-webkit-text-stroke:0.15px #000;">619</div>
<div style="position:absolute;left:505.79999999999995px;top:418.00px;width:121.90000000000002px;text-align:right;font-size:8.35px;line-height:8.35px;color:#000;font-weight:normal;white-space:nowrap;-webkit-text-stroke:0.15px #000;">526</div>
<div style="position:absolute;left:549.4px;top:418.00px;width:121.40000000000002px;text-align:right;font-size:8.35px;line-height:8.35px;color:#000;font-weight:normal;white-space:nowrap;-webkit-text-stroke:0.15px #000;">1,251</div>
<div style="position:absolute;left:592.5px;top:418.00px;width:122.05px;text-align:right;font-size:8.35px;line-height:8.35px;color:#000;font-weight:normal;white-space:nowrap;-webkit-text-stroke:0.15px #000;">1,876</div>
<div style="position:absolute;left:636.25px;top:418.00px;width:122.05px;text-align:right;font-size:8.35px;line-height:8.35px;color:#000;font-weight:normal;white-space:nowrap;-webkit-text-stroke:0.15px #000;">834</div>
<div style="position:absolute;left:282px;top:441.00px;width:121.90000000000002px;text-align:right;font-size:8.35px;line-height:8.35px;color:#ffffff;font-weight:normal;white-space:nowrap;-webkit-text-stroke:0.15px #ffffff;">(3,026)</div>
<div style="position:absolute;left:325.6px;top:441.00px;width:127.19999999999997px;text-align:right;font-size:8.35px;line-height:8.35px;color:#ffffff;font-weight:normal;white-space:nowrap;-webkit-text-stroke:0.15px #ffffff;">(4,076)</div>
<div style="position:absolute;left:374.5px;top:441.00px;width:122.49999999999999px;text-align:right;font-size:8.35px;line-height:8.35px;color:#ffffff;font-weight:normal;white-space:nowrap;-webkit-text-stroke:0.15px #ffffff;">(3,712)</div>
<div style="position:absolute;left:418.7px;top:441.00px;width:122.10000000000001px;text-align:right;font-size:8.35px;line-height:8.35px;color:#ffffff;font-weight:normal;white-space:nowrap;-webkit-text-stroke:0.15px #ffffff;">(4,041)</div>
<div style="position:absolute;left:462.5px;top:441.00px;width:121.59999999999995px;text-align:right;font-size:8.35px;line-height:8.35px;color:#ffffff;font-weight:normal;white-space:nowrap;-webkit-text-stroke:0.15px #ffffff;">29</div>
<div style="position:absolute;left:505.79999999999995px;top:441.00px;width:121.90000000000002px;text-align:right;font-size:8.35px;line-height:8.35px;color:#ffffff;font-weight:normal;white-space:nowrap;-webkit-text-stroke:0.15px #ffffff;">2,087</div>
<div style="position:absolute;left:549.4px;top:441.00px;width:121.40000000000002px;text-align:right;font-size:8.35px;line-height:8.35px;color:#ffffff;font-weight:normal;white-space:nowrap;-webkit-text-stroke:0.15px #ffffff;">(146)</div>
<div style="position:absolute;left:592.5px;top:441.00px;width:122.05px;text-align:right;font-size:8.35px;line-height:8.35px;color:#ffffff;font-weight:normal;white-space:nowrap;-webkit-text-stroke:0.15px #ffffff;">(3,574)</div>
<div style="position:absolute;left:636.25px;top:441.00px;width:122.05px;text-align:right;font-size:8.35px;line-height:8.35px;color:#ffffff;font-weight:normal;white-space:nowrap;-webkit-text-stroke:0.15px #ffffff;">(827)</div>
<div style="position:absolute;left:282px;top:464.00px;width:121.90000000000002px;text-align:right;font-size:8.35px;line-height:8.35px;color:#000;font-weight:normal;white-space:nowrap;-webkit-text-stroke:0.15px #000;">(3,026)</div>
<div style="position:absolute;left:325.6px;top:464.00px;width:127.19999999999997px;text-align:right;font-size:8.35px;line-height:8.35px;color:#000;font-weight:normal;white-space:nowrap;-webkit-text-stroke:0.15px #000;">(4,076)</div>
<div style="position:absolute;left:374.5px;top:464.00px;width:122.49999999999999px;text-align:right;font-size:8.35px;line-height:8.35px;color:#000;font-weight:normal;white-space:nowrap;-webkit-text-stroke:0.15px #000;">(3,712)</div>
<div style="position:absolute;left:418.7px;top:464.00px;width:122.10000000000001px;text-align:right;font-size:8.35px;line-height:8.35px;color:#000;font-weight:normal;white-space:nowrap;-webkit-text-stroke:0.15px #000;">(4,041)</div>
<div style="position:absolute;left:462.5px;top:464.00px;width:121.59999999999995px;text-align:right;font-size:8.35px;line-height:8.35px;color:#000;font-weight:normal;white-space:nowrap;-webkit-text-stroke:0.15px #000;">29</div>
<div style="position:absolute;left:505.79999999999995px;top:464.00px;width:121.90000000000002px;text-align:right;font-size:8.35px;line-height:8.35px;color:#000;font-weight:normal;white-space:nowrap;-webkit-text-stroke:0.15px #000;">2,087</div>
<div style="position:absolute;left:549.4px;top:464.00px;width:121.40000000000002px;text-align:right;font-size:8.35px;line-height:8.35px;color:#000;font-weight:normal;white-space:nowrap;-webkit-text-stroke:0.15px #000;">(146)</div>
<div style="position:absolute;left:592.5px;top:464.00px;width:122.05px;text-align:right;font-size:8.35px;line-height:8.35px;color:#000;font-weight:normal;white-space:nowrap;-webkit-text-stroke:0.15px #000;">(3,574)</div>
<div style="position:absolute;left:636.25px;top:464.00px;width:122.05px;text-align:right;font-size:8.35px;line-height:8.35px;color:#000;font-weight:normal;white-space:nowrap;-webkit-text-stroke:0.15px #000;">(827)</div>
<div style="position:absolute;left:282px;top:511.00px;width:121.90000000000002px;text-align:right;font-size:8.35px;line-height:8.35px;color:#000;font-weight:normal;white-space:nowrap;-webkit-text-stroke:0.15px #000;">1,489</div>
<div style="position:absolute;left:325.6px;top:511.00px;width:127.19999999999997px;text-align:right;font-size:8.35px;line-height:8.35px;color:#000;font-weight:normal;white-space:nowrap;-webkit-text-stroke:0.15px #000;">1,561</div>
<div style="position:absolute;left:374.5px;top:511.00px;width:122.49999999999999px;text-align:right;font-size:8.35px;line-height:8.35px;color:#000;font-weight:normal;white-space:nowrap;-webkit-text-stroke:0.15px #000;">1,958</div>
<div style="position:absolute;left:418.7px;top:511.00px;width:122.10000000000001px;text-align:right;font-size:8.35px;line-height:8.35px;color:#000;font-weight:normal;white-space:nowrap;-webkit-text-stroke:0.15px #000;">1,750</div>
<div style="position:absolute;left:462.5px;top:511.00px;width:121.59999999999995px;text-align:right;font-size:8.35px;line-height:8.35px;color:#000;font-weight:normal;white-space:nowrap;-webkit-text-stroke:0.15px #000;">1,767</div>
<div style="position:absolute;left:505.79999999999995px;top:511.00px;width:121.90000000000002px;text-align:right;font-size:8.35px;line-height:8.35px;color:#000;font-weight:normal;white-space:nowrap;-webkit-text-stroke:0.15px #000;">1,539</div>
<div style="position:absolute;left:549.4px;top:511.00px;width:121.40000000000002px;text-align:right;font-size:8.35px;line-height:8.35px;color:#000;font-weight:normal;white-space:nowrap;-webkit-text-stroke:0.15px #000;">1,858</div>
<div style="position:absolute;left:592.5px;top:511.00px;width:122.05px;text-align:right;font-size:8.35px;line-height:8.35px;color:#000;font-weight:normal;white-space:nowrap;-webkit-text-stroke:0.15px #000;">1,878</div>
<div style="position:absolute;left:636.25px;top:511.00px;width:122.05px;text-align:right;font-size:8.35px;line-height:8.35px;color:#000;font-weight:normal;white-space:nowrap;-webkit-text-stroke:0.15px #000;">1,496</div>
<div style="position:absolute;left:282px;top:523.00px;width:121.90000000000002px;text-align:right;font-size:8.35px;line-height:8.35px;color:#000;font-weight:normal;white-space:nowrap;-webkit-text-stroke:0.15px #000;">(197)</div>
<div style="position:absolute;left:325.6px;top:523.00px;width:127.19999999999997px;text-align:right;font-size:8.35px;line-height:8.35px;color:#000;font-weight:normal;white-space:nowrap;-webkit-text-stroke:0.15px #000;">(197)</div>
<div style="position:absolute;left:374.5px;top:523.00px;width:122.49999999999999px;text-align:right;font-size:8.35px;line-height:8.35px;color:#000;font-weight:normal;white-space:nowrap;-webkit-text-stroke:0.15px #000;">(90)</div>
<div style="position:absolute;left:418.7px;top:523.00px;width:122.10000000000001px;text-align:right;font-size:8.35px;line-height:8.35px;color:#000;font-weight:normal;white-space:nowrap;-webkit-text-stroke:0.15px #000;">(74)</div>
<div style="position:absolute;left:462.5px;top:523.00px;width:121.59999999999995px;text-align:right;font-size:8.35px;line-height:8.35px;color:#000;font-weight:normal;white-space:nowrap;-webkit-text-stroke:0.15px #000;">(108)</div>
<div style="position:absolute;left:505.79999999999995px;top:523.00px;width:121.90000000000002px;text-align:right;font-size:8.35px;line-height:8.35px;color:#000;font-weight:normal;white-space:nowrap;-webkit-text-stroke:0.15px #000;">(45)</div>
<div style="position:absolute;left:549.4px;top:523.00px;width:121.40000000000002px;text-align:right;font-size:8.35px;line-height:8.35px;color:#000;font-weight:normal;white-space:nowrap;-webkit-text-stroke:0.15px #000;">(196)</div>
<div style="position:absolute;left:592.5px;top:523.00px;width:122.05px;text-align:right;font-size:8.35px;line-height:8.35px;color:#000;font-weight:normal;white-space:nowrap;-webkit-text-stroke:0.15px #000;">(89)</div>
<div style="position:absolute;left:636.25px;top:523.00px;width:122.05px;text-align:right;font-size:8.35px;line-height:8.35px;color:#000;font-weight:normal;white-space:nowrap;-webkit-text-stroke:0.15px #000;">(124)</div>
<div style="position:absolute;left:282px;top:534.00px;width:121.90000000000002px;text-align:right;font-size:8.35px;line-height:8.35px;color:#000;font-weight:bold;white-space:nowrap;-webkit-text-stroke:0.15px #000;">1,292</div>
<div style="position:absolute;left:325.6px;top:534.00px;width:127.19999999999997px;text-align:right;font-size:8.35px;line-height:8.35px;color:#000;font-weight:bold;white-space:nowrap;-webkit-text-stroke:0.15px #000;">1,364</div>
<div style="position:absolute;left:374.5px;top:534.00px;width:122.49999999999999px;text-align:right;font-size:8.35px;line-height:8.35px;color:#000;font-weight:bold;white-space:nowrap;-webkit-text-stroke:0.15px #000;">1,868</div>
<div style="position:absolute;left:418.7px;top:534.00px;width:122.10000000000001px;text-align:right;font-size:8.35px;line-height:8.35px;color:#000;font-weight:bold;white-space:nowrap;-webkit-text-stroke:0.15px #000;">1,676</div>
<div style="position:absolute;left:462.5px;top:534.00px;width:121.59999999999995px;text-align:right;font-size:8.35px;line-height:8.35px;color:#000;font-weight:bold;white-space:nowrap;-webkit-text-stroke:0.15px #000;">1,659</div>
<div style="position:absolute;left:505.79999999999995px;top:534.00px;width:121.90000000000002px;text-align:right;font-size:8.35px;line-height:8.35px;color:#000;font-weight:bold;white-space:nowrap;-webkit-text-stroke:0.15px #000;">1,494</div>
<div style="position:absolute;left:549.4px;top:534.00px;width:121.40000000000002px;text-align:right;font-size:8.35px;line-height:8.35px;color:#000;font-weight:bold;white-space:nowrap;-webkit-text-stroke:0.15px #000;">1,662</div>
<div style="position:absolute;left:592.5px;top:534.00px;width:122.05px;text-align:right;font-size:8.35px;line-height:8.35px;color:#000;font-weight:bold;white-space:nowrap;-webkit-text-stroke:0.15px #000;">1,789</div>
<div style="position:absolute;left:636.25px;top:534.00px;width:122.05px;text-align:right;font-size:8.35px;line-height:8.35px;color:#000;font-weight:bold;white-space:nowrap;-webkit-text-stroke:0.15px #000;">1,372</div>
<div style="position:absolute;left:760px;top:217.5px;width:24.299999999999955px;height:328.1px;overflow:hidden;">
<div style="position:absolute;left:-36px;top:13.50px;width:78.3px;text-align:right;font-size:8.35px;line-height:8.35px;color:#ffffff;font-weight:normal;white-space:nowrap;">ต.ค.-14</div>
<div style="position:absolute;left:-36px;top:60.50px;width:78.3px;text-align:right;font-size:8.35px;line-height:8.35px;color:#ffffff;font-weight:normal;white-space:nowrap;">3,095</div>
<div style="position:absolute;left:-36px;top:83.50px;width:78.3px;text-align:right;font-size:8.35px;line-height:8.35px;color:#000;font-weight:normal;white-space:nowrap;">112</div>
<div style="position:absolute;left:-36px;top:95.50px;width:78.3px;text-align:right;font-size:8.35px;line-height:8.35px;color:#000;font-weight:normal;white-space:nowrap;">318</div>
<div style="position:absolute;left:-36px;top:106.50px;width:78.3px;text-align:right;font-size:8.35px;line-height:8.35px;color:#000;font-weight:normal;white-space:nowrap;">154</div>
<div style="position:absolute;left:-36px;top:118.50px;width:78.3px;text-align:right;font-size:8.35px;line-height:8.35px;color:#000;font-weight:normal;white-space:nowrap;">396</div>
<div style="position:absolute;left:-36px;top:141.50px;width:78.3px;text-align:right;font-size:8.35px;line-height:8.35px;color:#ffffff;font-weight:normal;white-space:nowrap;">2,990</div>
<div style="position:absolute;left:-36px;top:165.50px;width:78.3px;text-align:right;font-size:8.35px;line-height:8.35px;color:#000;font-weight:normal;white-space:nowrap;">1,011</div>
<div style="position:absolute;left:-36px;top:176.50px;width:78.3px;text-align:right;font-size:8.35px;line-height:8.35px;color:#000;font-weight:normal;white-space:nowrap;">502</div>
<div style="position:absolute;left:-36px;top:188.50px;width:78.3px;text-align:right;font-size:8.35px;line-height:8.35px;color:#000;font-weight:normal;white-space:nowrap;">162</div>
<div style="position:absolute;left:-36px;top:200.50px;width:78.3px;text-align:right;font-size:8.35px;line-height:8.35px;color:#000;font-weight:normal;white-space:nowrap;">834</div>
<div style="position:absolute;left:-36px;top:223.50px;width:78.3px;text-align:right;font-size:8.35px;line-height:8.35px;color:#ffffff;font-weight:normal;white-space:nowrap;">(27)</div>
<div style="position:absolute;left:-36px;top:246.50px;width:78.3px;text-align:right;font-size:8.35px;line-height:8.35px;color:#000;font-weight:normal;white-space:nowrap;">(27)</div>
<div style="position:absolute;left:-36px;top:293.50px;width:78.3px;text-align:right;font-size:8.35px;line-height:8.35px;color:#000;font-weight:normal;white-space:nowrap;">1,497</div>
<div style="position:absolute;left:-36px;top:305.50px;width:78.3px;text-align:right;font-size:8.35px;line-height:8.35px;color:#000;font-weight:normal;white-space:nowrap;">(124)</div>
<div style="position:absolute;left:-36px;top:316.50px;width:78.3px;text-align:right;font-size:8.35px;line-height:8.35px;color:#000;font-weight:bold;white-space:nowrap;">1,374</div>
</div>
<div style="position:absolute;left:453.9px;top:390.905px;width:45.39999999999999px;height:14.067px;border:1.8px solid #217346;"></div>
<div style="position:absolute;left:497.3px;top:402.572px;width:3.2px;height:3.2px;background:#217346;box-shadow:0 0 0 0.6px #fff;"></div>
<div style="position:absolute;left:55.9px;top:236.9px;width:45px;height:45px;border-radius:50%;background:#ffff00;mix-blend-mode:multiply;"></div>
<svg style="position:absolute;left:55.9px;top:236.9px;mix-blend-mode:lighten;" width="45" height="45" viewBox="0 0 45 45"><defs><clipPath id="cc"><circle cx="22.5" cy="22.5" r="22.5"/></clipPath></defs><g clip-path="url(#cc)"><rect x="0" y="-8.03" width="45" height="12.17" fill="#000038"/><rect x="0" y="15.30" width="45" height="12.17" fill="#000038"/><rect x="0" y="38.63" width="45" height="12.17" fill="#000038"/></g></svg>
<svg style="position:absolute;left:72.5px;top:253.5px;overflow:visible;" width="12" height="12" viewBox="0 0 12 12"><path d="M4 0.6h4v3.4h3.4v4H8v3.4H4V8H0.6V4H4z" fill="#fff" stroke="#000" stroke-width="1"/></svg>
<div style="position:absolute;left:787.7px;top:208.7px;width:10.8px;height:10.8px;background:#fff;border:1px solid #c6c6c6;"></div>
<svg style="position:absolute;left:790.6px;top:212.3px;overflow:visible;" width="5" height="3" viewBox="0 0 5 3"><path d="M0 3L2.5 0 5 3z" fill="#444"/></svg>
<div style="position:absolute;left:787.7px;top:219.5px;width:10.8px;height:220.5px;background:#fff;border:1px solid #c6c6c6;border-top:none;"></div>
<div style="position:absolute;left:787.7px;top:534.8px;width:10.8px;height:10.7px;background:#fff;border:1px solid #c6c6c6;"></div>
<svg style="position:absolute;left:790.6px;top:538.8px;overflow:visible;" width="5" height="3" viewBox="0 0 5 3"><path d="M0 0L2.5 3 5 0z" fill="#444"/></svg>
<div style="position:absolute;left:0px;top:545.6px;width:800px;height:22.4px;background:#e6e6e6;"></div>
<div style="position:absolute;left:0px;top:545.6px;width:800px;height:1px;background:#c8c8c8;"></div>
<svg style="position:absolute;left:22.5px;top:553px;overflow:visible;" width="5" height="7" viewBox="0 0 5 7"><path d="M4 0.5L1 3.5 4 6.5" fill="none" stroke="#b0b0b0" stroke-width="1.4"/></svg>
<svg style="position:absolute;left:44.5px;top:553px;overflow:visible;" width="5" height="7" viewBox="0 0 5 7"><path d="M1 0.5L4 3.5 1 6.5" fill="none" stroke="#b0b0b0" stroke-width="1.4"/></svg>
<div style="position:absolute;left:79.3px;top:549.5px;width:1px;height:15px;background:#a8a8a8;"></div>
<div style="position:absolute;left:89.75px;top:552.00px;font-family:'Liberation Sans',sans-serif;font-size:9.6px;line-height:9.6px;color:#444;font-weight:normal;white-space:nowrap;-webkit-text-stroke:0.18px #444;transform:scaleX(1.0207);transform-origin:0 0;">Steering</div>
<div style="position:absolute;left:138.1px;top:545.6px;width:117.5px;height:20px;background:#fff;border-left:1px solid #c8c8c8;border-right:1px solid #c8c8c8;"></div>
<div style="position:absolute;left:138.1px;top:563.9px;width:117.5px;height:1.9px;background:#217346;"></div>
<div style="position:absolute;left:147.50px;top:552.00px;font-family:'Liberation Sans',sans-serif;font-size:9.6px;line-height:9.6px;color:#217346;font-weight:bold;white-space:nowrap;-webkit-text-stroke:0.18px #217346;transform:scaleX(1.0281);transform-origin:0 0;">Financial Statements</div>
<svg style="position:absolute;left:281.9px;top:550.8px;overflow:visible;" width="12.2" height="12.2" viewBox="0 0 12.2 12.2"><circle cx="6.1" cy="6.1" r="5.5" fill="none" stroke="#666" stroke-width="1.1"/><path d="M6.1 3v6.2M3 6.1h6.2" stroke="#666" stroke-width="1.5"/></svg>
<svg style="position:absolute;left:481.2px;top:552.5px;overflow:visible;" width="2" height="9" viewBox="0 0 2 9"><circle cx="1" cy="1" r="0.7" fill="#aaa"/><circle cx="1" cy="4.5" r="0.7" fill="#aaa"/><circle cx="1" cy="8" r="0.7" fill="#aaa"/></svg>
<div style="position:absolute;left:495px;top:551.2px;width:12.3px;height:11.6px;background:#fff;border:1px solid #c6c6c6;"></div>
<svg style="position:absolute;left:499px;top:554.5px;overflow:visible;" width="4" height="5" viewBox="0 0 4 5"><path d="M3.5 0L0.5 2.5 3.5 5z" fill="#444"/></svg>
<div style="position:absolute;left:506.3px;top:551.2px;width:85px;height:11.6px;background:#fff;border:1px solid #c6c6c6;"></div>
<div style="position:absolute;left:772.3px;top:551.8px;width:11.3px;height:11.2px;background:#fff;border:1px solid #c6c6c6;"></div>
<svg style="position:absolute;left:776.5px;top:555px;overflow:visible;" width="4" height="5" viewBox="0 0 4 5"><path d="M0.5 0L3.5 2.5 0.5 5z" fill="#444"/></svg>
<div style="position:absolute;left:0px;top:568.2px;width:800px;height:16.8px;background:#f3f2f1;"></div>
<div style="position:absolute;left:0px;top:567.6px;width:800px;height:0.8px;background:#dcdcdc;"></div>
<div style="position:absolute;left:7.90px;top:572.00px;font-family:'Liberation Sans',sans-serif;font-size:8.6px;line-height:8.6px;color:#444;font-weight:normal;white-space:nowrap;-webkit-text-stroke:0.18px #444;transform:scaleX(0.9656);transform-origin:0 0;">Ready</div>
<div style="position:absolute;left:561px;top:568.2px;width:29.6px;height:16.8px;background:#d2d0ce;"></div>
<svg style="position:absolute;left:569.4px;top:571.4px;overflow:visible;" width="10.3" height="9.4" viewBox="0 0 10.3 9.4"><rect x="0.5" y="0.5" width="9.3" height="8.4" fill="none" stroke="#333" stroke-width="1"/><path d="M3.6 0.5v8.4M6.7 0.5v8.4M0.5 3.3h9.3M0.5 6.1h9.3" stroke="#333" stroke-width="0.8"/></svg>
<svg style="position:absolute;left:600.6px;top:571.4px;overflow:visible;" width="11.3" height="9.4" viewBox="0 0 11.3 9.4"><rect x="0.5" y="0.5" width="10.3" height="8.4" fill="none" stroke="#555" stroke-width="1"/><rect x="3" y="2" width="5.3" height="5.4" fill="none" stroke="#555" stroke-width="0.8"/></svg>
<svg style="position:absolute;left:631.9px;top:571.4px;overflow:visible;" width="11.2" height="9.4" viewBox="0 0 11.2 9.4"><path d="M0.5 0.5h10.2v8.4H0.5z" fill="none" stroke="#555" stroke-width="1"/><path d="M5.6 0.5v4.5h5.1" fill="none" stroke="#555" stroke-width="1"/></svg>
<div style="position:absolute;left:657.8px;top:575.6px;width:4.7px;height:1px;background:#555;"></div>
<div style="position:absolute;left:668px;top:576px;width:77.3px;height:0.9px;background:#a0a0a0;"></div>
<div style="position:absolute;left:704.7px;top:572px;width:4.7px;height:8.75px;background:#5c5c5c;"></div>
<svg style="position:absolute;left:749.4px;top:573.3px;overflow:visible;" width="6.2" height="6.2" viewBox="0 0 6.2 6.2"><path d="M0 3.1h6.2M3.1 0v6.2" stroke="#555" stroke-width="1"/></svg>
<div style="position:absolute;left:766.25px;top:573.00px;font-family:'Liberation Sans',sans-serif;font-size:8.6px;line-height:8.6px;color:#444;font-weight:normal;white-space:nowrap;-webkit-text-stroke:0.18px #444;transform:scaleX(0.9243);transform-origin:0 0;">100%</div>
<div style="position:absolute;left:0px;top:0px;width:1.6px;height:585px;background:linear-gradient(#3a4436,#2a3028,#2d3a30);"></div>
<div style="position:absolute;left:1.6px;top:28px;width:0.6px;height:557px;background:#ffffff;opacity:0.6;"></div>
<div style="position:absolute;left:0px;top:0px;width:800px;height:1px;background:linear-gradient(90deg,#7a7060,#4c6e58,#807560,#5c705c,#8a8070);opacity:0.7;"></div>
</body></html>
